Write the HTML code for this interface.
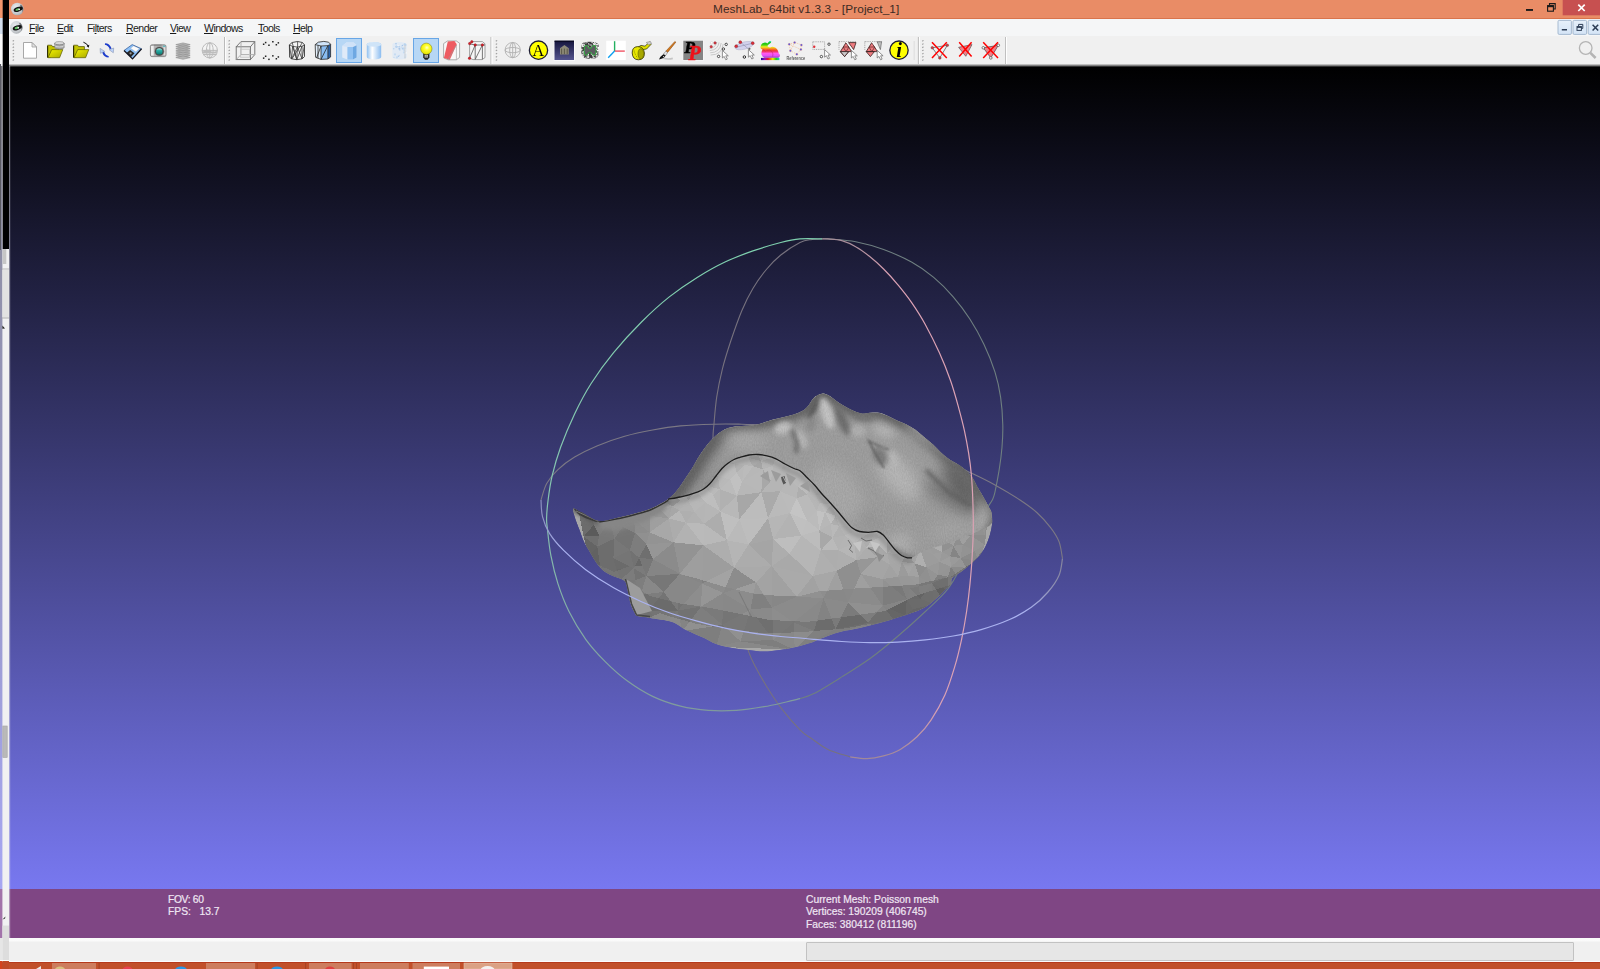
<!DOCTYPE html>
<html>
<head>
<meta charset="utf-8">
<title>MeshLab_64bit v1.3.3 - [Project_1]</title>
<style>
html,body{margin:0;padding:0;}
body{width:1600px;height:969px;overflow:hidden;position:relative;background:#000;font-family:"Liberation Sans",sans-serif;}
.abs{position:absolute;}
#titlebar{left:9px;top:0;width:1591px;height:18px;background:#e98c66;border-bottom:1px solid #d9744c;}
#title{left:713px;top:2px;width:186px;height:15px;line-height:15px;font-size:11.8px;letter-spacing:0.1px;color:#3b2a24;white-space:nowrap;text-align:center;}
#menubar{left:9px;top:19px;width:1591px;height:17px;background:#f5f6f7;}
.mi{position:absolute;top:22px;font-size:10.6px;line-height:13px;color:#1a1a1a;white-space:nowrap;letter-spacing:-0.6px;}
.mi u{text-decoration:underline;text-decoration-thickness:1px;text-underline-offset:1px;}
#toolbar{left:9px;top:36px;width:1591px;height:28px;background:#f0f0f0;}
#tbshadow{left:9px;top:64px;width:1591px;height:3px;background:linear-gradient(#dcdcdc,#8c8c8c 45%,#303030 85%,#000);}
#viewport{left:9px;top:66px;width:1591px;height:824px;background:linear-gradient(#000000,#7878f0);}
#infobar{left:9px;top:889px;width:1591px;height:49px;background:#7f4684;}
.it{position:absolute;font-size:10.3px;line-height:12.35px;color:#efe6f3;white-space:pre;-webkit-text-stroke:0.2px #efe6f3;}
#statusbar{left:9px;top:938px;width:1591px;height:24px;background:linear-gradient(#fbfbfb 0,#fafafa 3px,#f0f0f0 4px,#f0f0f0 22.5px,#fcfcfc 23px);}
#progress{left:806px;top:942px;width:766px;height:17px;background:#e6e6e6;border:1px solid #c2c2c2;border-radius:1px;}
</style>
</head>
<body>
<div id="viewport" class="abs"></div>
<!--SCENE-->
<svg class="abs" id="scene" style="left:0;top:0" width="1600" height="969" viewBox="0 0 1600 969">
<defs>
<clipPath id="cSil"><path d="M573.2 508.3C574.4 507.4 577.7 510.4 582.0 512.5C586.3 514.6 592.7 520.2 599.0 521.0C605.3 521.8 614.0 518.5 620.0 517.3C626.0 516.0 630.0 514.9 635.0 513.5C640.0 512.1 645.5 510.8 650.0 509.0C654.5 507.2 659.0 504.6 662.0 503.0C665.0 501.4 666.0 500.8 668.0 499.3C670.0 497.8 672.0 496.1 674.0 494.0C676.0 491.9 678.0 489.2 680.0 486.5C682.0 483.8 684.0 480.5 686.0 477.5C688.0 474.5 690.0 471.8 692.0 468.5C694.0 465.2 696.0 461.2 698.0 458.0C700.0 454.8 702.0 451.8 704.0 449.0C706.0 446.2 708.0 443.8 710.0 441.5C712.0 439.2 714.0 437.2 716.0 435.5C718.0 433.8 720.0 432.2 722.0 431.0C724.0 429.8 725.5 428.8 728.0 428.0C730.5 427.2 734.0 426.6 737.0 426.2C740.0 425.8 743.0 426.0 746.0 425.8C749.0 425.6 752.5 425.4 755.0 425.0C757.5 424.6 758.5 424.2 761.0 423.5C763.5 422.8 767.0 421.4 770.0 420.5C773.0 419.6 775.5 419.2 779.0 418.3C782.5 417.4 787.8 416.2 791.0 415.3C794.2 414.4 795.8 413.9 798.0 413.0C800.2 412.1 802.2 411.2 804.0 410.0C805.8 408.8 807.0 407.4 808.5 405.5C810.0 403.6 811.5 400.6 813.0 398.8C814.5 397.1 815.9 395.9 817.5 395.0C819.1 394.1 821.0 393.5 822.8 393.5C824.5 393.5 826.4 394.2 828.0 395.0C829.6 395.8 830.8 396.8 832.5 398.0C834.2 399.2 836.2 401.0 838.5 402.5C840.8 404.0 843.2 405.5 846.0 407.0C848.8 408.5 852.2 410.4 855.0 411.5C857.8 412.6 860.0 413.6 862.5 413.8C865.0 414.0 867.2 412.9 870.0 412.7C872.8 412.5 876.0 412.1 879.0 412.7C882.0 413.2 885.0 414.7 888.0 416.0C891.0 417.3 894.0 419.1 897.0 420.5C900.0 421.9 903.0 422.8 906.0 424.3C909.0 425.8 912.0 427.4 915.0 429.5C918.0 431.6 921.0 434.5 924.0 437.0C927.0 439.5 930.0 441.8 933.0 444.5C936.0 447.2 939.2 451.0 942.0 453.5C944.8 456.0 946.5 457.5 949.5 459.5C952.5 461.5 957.0 463.5 960.0 465.5C963.0 467.5 965.2 469.2 967.5 471.5C969.8 473.8 971.8 476.2 973.5 479.0C975.2 481.8 976.5 485.2 978.0 488.0C979.5 490.8 981.0 492.9 982.5 495.5C984.0 498.1 985.5 500.8 987.0 503.5C988.5 506.2 990.6 508.8 991.5 512.0C992.4 515.2 992.5 518.8 992.3 522.5C992.0 526.2 991.1 530.5 990.0 534.5C988.9 538.5 987.2 543.0 985.5 546.5C983.8 550.0 981.8 552.8 979.5 555.5C977.2 558.2 974.8 560.5 972.0 563.0C969.2 565.5 966.2 568.0 963.0 570.5C959.8 573.0 954.5 575.6 952.5 578.0C950.5 580.4 952.2 582.8 951.0 584.8C949.8 586.8 947.5 587.6 945.0 590.0C942.5 592.4 939.5 596.0 936.0 599.0C932.5 602.0 928.5 605.5 924.0 608.0C919.5 610.5 913.0 612.5 909.0 614.0C905.0 615.5 904.8 615.5 900.0 617.0C895.2 618.5 886.7 621.2 880.0 623.0C873.3 624.8 866.7 626.5 860.0 628.0C853.3 629.5 846.7 630.2 840.0 632.0C833.3 633.8 824.7 637.3 820.0 639.0C815.3 640.7 816.0 641.1 812.0 642.4C808.0 643.7 801.3 645.7 796.0 647.0C790.7 648.3 785.3 649.2 780.0 650.0C774.7 650.8 769.3 651.6 764.0 651.6C758.7 651.6 753.3 650.6 748.0 650.0C742.7 649.4 737.3 649.0 732.0 648.0C726.7 647.0 720.7 645.7 716.0 644.0C711.3 642.3 709.0 640.3 704.0 638.0C699.0 635.7 691.3 632.7 686.0 630.0C680.7 627.3 678.0 624.0 672.0 622.0C666.0 620.0 655.7 619.0 650.0 618.0C644.3 617.0 640.5 617.0 638.0 616.3C635.5 615.6 636.2 616.1 635.0 614.0C633.8 611.9 631.8 607.5 630.5 603.5C629.2 599.5 628.5 593.8 627.5 590.0C626.5 586.2 626.8 583.2 624.5 581.0C622.2 578.8 617.2 578.0 614.0 576.5C610.8 575.0 607.8 574.0 605.0 572.0C602.2 570.0 600.0 567.8 597.5 564.5C595.0 561.2 592.2 556.2 590.0 552.5C587.8 548.8 585.8 545.8 584.0 542.0C582.2 538.2 581.0 534.0 579.5 530.0C578.0 526.0 576.0 521.6 575.0 518.0C574.0 514.4 572.0 509.2 573.2 508.3Z"/></clipPath>
<clipPath id="cFace"><path d="M668.0 499.3L674.0 494.0L680.0 486.5L686.0 477.5L692.0 468.5L698.0 458.0L704.0 449.0L710.0 441.5L716.0 435.5L722.0 431.0L728.0 428.0L737.0 426.2L746.0 425.8L755.0 425.0L761.0 423.5L770.0 420.5L779.0 418.3L791.0 415.3L798.0 413.0L804.0 410.0L808.5 405.5L813.0 398.8L817.5 395.0L822.8 393.5L828.0 395.0L832.5 398.0L838.5 402.5L846.0 407.0L855.0 411.5L862.5 413.8L870.0 412.7L879.0 412.7L888.0 416.0L897.0 420.5L906.0 424.3L915.0 429.5L924.0 437.0L933.0 444.5L942.0 453.5L949.5 459.5L960.0 465.5L967.5 471.5L973.5 479.0L978.0 488.0L982.5 495.5L987.0 503.5L991.5 512.0L992.3 522.5L989.0 526.0L975.0 533.0L958.0 540.0L940.0 546.0L924.0 550.5L912.0 557.8L907.5 557.8L901.5 555.5L895.5 550.3L889.5 542.8L883.5 535.3L877.5 531.5L868.5 532.3L859.5 531.5L852.0 527.8L844.5 519.5L837.0 510.5L829.5 502.0L822.0 494.0L814.5 485.0L807.0 477.5L800.0 470.8L794.0 468.5L785.0 464.0L776.0 458.8L767.0 455.8L758.0 454.5L749.0 455.0L740.0 457.3L734.0 459.5L728.0 463.3L722.0 468.5L716.0 476.0L710.0 483.5L704.0 488.8L698.0 491.8L689.0 494.8L680.0 497.0L668.0 499.3Z"/></clipPath>
<filter id="b1" x="-50%" y="-50%" width="200%" height="200%"><feGaussianBlur stdDeviation="1.1"/></filter>
<filter id="b3" x="-50%" y="-50%" width="200%" height="200%"><feGaussianBlur stdDeviation="2.8"/></filter>
<filter id="b2" x="-50%" y="-50%" width="200%" height="200%"><feGaussianBlur stdDeviation="2"/></filter>
<filter id="b4" x="-50%" y="-50%" width="200%" height="200%"><feGaussianBlur stdDeviation="4"/></filter>
<filter id="b7" x="-50%" y="-50%" width="200%" height="200%"><feGaussianBlur stdDeviation="7"/></filter>
<filter id="grain" x="0" y="0" width="100%" height="100%"><feTurbulence type="fractalNoise" baseFrequency="0.9 0.45" numOctaves="2" seed="4"/><feColorMatrix type="matrix" values="0 0 0 0 0  0 0 0 0 0  0 0 0 0 0  1.6 0 0 0 -0.35"/></filter>
<filter id="b12" x="-50%" y="-50%" width="200%" height="200%"><feGaussianBlur stdDeviation="12"/></filter>
<linearGradient id="gGreen" gradientUnits="userSpaceOnUse" x1="700" y1="250" x2="700" y2="710"><stop offset="0" stop-color="#7fd0ae"/><stop offset="0.55" stop-color="#86c4b0"/><stop offset="1" stop-color="#7f9a9c"/></linearGradient>
<linearGradient id="gHor" gradientUnits="userSpaceOnUse" x1="541" y1="0" x2="1063" y2="0"><stop offset="0" stop-color="#8c90c0"/><stop offset="0.04" stop-color="#aab2f0"/><stop offset="0.93" stop-color="#aab2f0"/><stop offset="1" stop-color="#85849c"/></linearGradient>
<linearGradient id="gPink" gradientUnits="userSpaceOnUse" x1="0" y1="239" x2="0" y2="759"><stop offset="0" stop-color="#a48c98"/><stop offset="0.07" stop-color="#dca2b4"/><stop offset="0.9" stop-color="#dca2b4"/><stop offset="1" stop-color="#a08898"/></linearGradient>
</defs>
<g fill="none" stroke-width="1.1">
<path d="M800.0 698.7C802.3 697.9 806.9 697.2 813.9 693.6C820.9 690.0 832.5 682.7 841.8 676.9C851.1 671.1 860.4 665.5 869.7 658.8C879.0 652.1 888.2 644.4 897.5 636.5C906.8 628.6 917.0 619.4 925.4 611.5C933.8 603.6 941.6 597.0 947.7 589.2C953.8 581.5 957.3 574.0 962.0 565.0C966.7 556.0 972.2 543.8 976.0 535.0C979.8 526.2 982.3 517.8 985.0 512.0C987.7 506.2 990.6 503.4 992.3 500.0C994.0 496.6 993.9 497.0 995.0 491.9C996.1 486.8 998.0 477.0 999.2 469.6C1000.4 462.2 1001.4 454.7 1002.0 447.3C1002.6 439.9 1003.0 433.4 1002.8 425.0C1002.6 416.6 1001.9 406.0 1000.6 397.2C999.3 388.4 997.8 380.9 995.0 372.1C992.2 363.3 988.1 353.0 983.9 344.2C979.7 335.4 975.1 327.1 970.0 319.2C964.9 311.3 959.2 303.9 953.2 296.9C947.2 289.9 940.7 283.2 933.7 277.4C926.8 271.6 919.9 266.6 911.5 262.0C903.1 257.4 892.9 252.9 883.6 249.5C874.3 246.1 865.0 243.5 855.7 241.7C846.4 239.9 833.5 239.4 827.9 238.9C822.3 238.4 823.2 238.9 822.3 238.9" stroke="#6f7f80"/>
<path d="M850.2 756.9C846.5 755.6 834.4 752.5 827.9 749.4C821.4 746.3 815.8 741.5 811.1 738.2C806.5 735.0 805.0 735.0 800.0 729.9C795.0 724.8 786.3 714.8 780.8 707.6C775.3 700.4 771.0 693.4 766.8 686.7C762.6 680.0 758.7 673.0 755.7 667.2C752.7 661.4 751.5 659.8 748.7 651.9C745.9 644.0 742.1 632.0 739.0 620.0C735.9 608.0 732.8 593.3 730.0 580.0C727.2 566.7 724.3 553.3 722.0 540.0C719.7 526.7 717.5 512.5 716.0 500.0C714.5 487.5 713.5 475.4 713.0 465.0C712.5 454.6 712.9 444.3 713.0 437.6C713.1 430.9 713.3 431.7 713.9 425.0C714.5 418.3 715.3 406.5 716.7 397.2C718.1 387.9 720.0 378.6 722.3 369.3C724.6 360.0 727.4 351.2 730.6 341.5C733.9 331.8 738.1 319.6 741.8 310.8C745.5 302.0 748.7 295.5 752.9 288.5C757.1 281.5 762.1 274.6 766.8 269.0C771.4 263.4 775.3 259.4 780.8 255.0C786.3 250.6 794.8 245.1 800.0 242.5C805.2 239.9 808.3 240.1 812.0 239.5C815.7 238.9 820.6 239.0 822.3 238.9" stroke="#77727e"/>
<path d="M1062.5 558.5C1061.9 555.7 1061.0 546.9 1059.1 541.8C1057.1 536.7 1054.5 532.8 1050.8 527.9C1047.1 523.0 1041.9 517.1 1036.8 512.5C1031.7 507.9 1027.0 504.6 1020.0 500.0C1013.0 495.4 1002.9 489.4 995.0 485.0C987.1 480.6 982.0 478.1 972.8 473.8C963.6 469.5 952.1 463.8 940.0 459.0C927.9 454.2 913.3 449.0 900.0 445.0C886.7 441.0 873.3 437.7 860.0 435.0C846.7 432.3 831.7 430.5 820.0 429.0C808.3 427.5 799.8 426.7 790.0 426.0C780.2 425.3 769.3 425.3 761.3 425.0C753.3 424.7 749.7 424.3 741.8 424.2C733.9 424.1 724.1 423.9 713.9 424.2C703.7 424.5 690.7 424.9 680.5 425.9C670.3 426.9 661.9 428.3 652.6 430.0C643.3 431.7 634.0 433.6 624.7 436.2C615.4 438.8 605.2 442.4 596.9 445.9C588.5 449.4 581.1 453.1 574.6 457.0C568.1 460.9 562.5 465.2 557.9 469.6C553.2 474.0 549.5 478.4 546.7 483.5C543.9 488.6 542.0 497.2 541.0 500.0" stroke="#7b7884"/>
</g>
<g clip-path="url(#cSil)">
<path d="M573.2 508.3C574.4 507.4 577.7 510.4 582.0 512.5C586.3 514.6 592.7 520.2 599.0 521.0C605.3 521.8 614.0 518.5 620.0 517.3C626.0 516.0 630.0 514.9 635.0 513.5C640.0 512.1 645.5 510.8 650.0 509.0C654.5 507.2 659.0 504.6 662.0 503.0C665.0 501.4 666.0 500.8 668.0 499.3C670.0 497.8 672.0 496.1 674.0 494.0C676.0 491.9 678.0 489.2 680.0 486.5C682.0 483.8 684.0 480.5 686.0 477.5C688.0 474.5 690.0 471.8 692.0 468.5C694.0 465.2 696.0 461.2 698.0 458.0C700.0 454.8 702.0 451.8 704.0 449.0C706.0 446.2 708.0 443.8 710.0 441.5C712.0 439.2 714.0 437.2 716.0 435.5C718.0 433.8 720.0 432.2 722.0 431.0C724.0 429.8 725.5 428.8 728.0 428.0C730.5 427.2 734.0 426.6 737.0 426.2C740.0 425.8 743.0 426.0 746.0 425.8C749.0 425.6 752.5 425.4 755.0 425.0C757.5 424.6 758.5 424.2 761.0 423.5C763.5 422.8 767.0 421.4 770.0 420.5C773.0 419.6 775.5 419.2 779.0 418.3C782.5 417.4 787.8 416.2 791.0 415.3C794.2 414.4 795.8 413.9 798.0 413.0C800.2 412.1 802.2 411.2 804.0 410.0C805.8 408.8 807.0 407.4 808.5 405.5C810.0 403.6 811.5 400.6 813.0 398.8C814.5 397.1 815.9 395.9 817.5 395.0C819.1 394.1 821.0 393.5 822.8 393.5C824.5 393.5 826.4 394.2 828.0 395.0C829.6 395.8 830.8 396.8 832.5 398.0C834.2 399.2 836.2 401.0 838.5 402.5C840.8 404.0 843.2 405.5 846.0 407.0C848.8 408.5 852.2 410.4 855.0 411.5C857.8 412.6 860.0 413.6 862.5 413.8C865.0 414.0 867.2 412.9 870.0 412.7C872.8 412.5 876.0 412.1 879.0 412.7C882.0 413.2 885.0 414.7 888.0 416.0C891.0 417.3 894.0 419.1 897.0 420.5C900.0 421.9 903.0 422.8 906.0 424.3C909.0 425.8 912.0 427.4 915.0 429.5C918.0 431.6 921.0 434.5 924.0 437.0C927.0 439.5 930.0 441.8 933.0 444.5C936.0 447.2 939.2 451.0 942.0 453.5C944.8 456.0 946.5 457.5 949.5 459.5C952.5 461.5 957.0 463.5 960.0 465.5C963.0 467.5 965.2 469.2 967.5 471.5C969.8 473.8 971.8 476.2 973.5 479.0C975.2 481.8 976.5 485.2 978.0 488.0C979.5 490.8 981.0 492.9 982.5 495.5C984.0 498.1 985.5 500.8 987.0 503.5C988.5 506.2 990.6 508.8 991.5 512.0C992.4 515.2 992.5 518.8 992.3 522.5C992.0 526.2 991.1 530.5 990.0 534.5C988.9 538.5 987.2 543.0 985.5 546.5C983.8 550.0 981.8 552.8 979.5 555.5C977.2 558.2 974.8 560.5 972.0 563.0C969.2 565.5 966.2 568.0 963.0 570.5C959.8 573.0 954.5 575.6 952.5 578.0C950.5 580.4 952.2 582.8 951.0 584.8C949.8 586.8 947.5 587.6 945.0 590.0C942.5 592.4 939.5 596.0 936.0 599.0C932.5 602.0 928.5 605.5 924.0 608.0C919.5 610.5 913.0 612.5 909.0 614.0C905.0 615.5 904.8 615.5 900.0 617.0C895.2 618.5 886.7 621.2 880.0 623.0C873.3 624.8 866.7 626.5 860.0 628.0C853.3 629.5 846.7 630.2 840.0 632.0C833.3 633.8 824.7 637.3 820.0 639.0C815.3 640.7 816.0 641.1 812.0 642.4C808.0 643.7 801.3 645.7 796.0 647.0C790.7 648.3 785.3 649.2 780.0 650.0C774.7 650.8 769.3 651.6 764.0 651.6C758.7 651.6 753.3 650.6 748.0 650.0C742.7 649.4 737.3 649.0 732.0 648.0C726.7 647.0 720.7 645.7 716.0 644.0C711.3 642.3 709.0 640.3 704.0 638.0C699.0 635.7 691.3 632.7 686.0 630.0C680.7 627.3 678.0 624.0 672.0 622.0C666.0 620.0 655.7 619.0 650.0 618.0C644.3 617.0 640.5 617.0 638.0 616.3C635.5 615.6 636.2 616.1 635.0 614.0C633.8 611.9 631.8 607.5 630.5 603.5C629.2 599.5 628.5 593.8 627.5 590.0C626.5 586.2 626.8 583.2 624.5 581.0C622.2 578.8 617.2 578.0 614.0 576.5C610.8 575.0 607.8 574.0 605.0 572.0C602.2 570.0 600.0 567.8 597.5 564.5C595.0 561.2 592.2 556.2 590.0 552.5C587.8 548.8 585.8 545.8 584.0 542.0C582.2 538.2 581.0 534.0 579.5 530.0C578.0 526.0 576.0 521.6 575.0 518.0C574.0 514.4 572.0 509.2 573.2 508.3Z" fill="#a8a8a8"/>
<g shape-rendering="crispEdges">
<path d="M835.7 629.1L814.1 630.9L814.0 631.0L825.0 630.0L835.2 629.4Z" fill="#6b6b6b"/>
<path d="M835.2 629.4L825.0 630.0L814.0 631.0L796.2 648.5L796.3 648.5L796.4 648.4L799.1 647.7Z" fill="#808080"/>
<path d="M867.8 622.7L859.7 625.8L870.0 624.0L873.9 626.1L880.4 624.5L880.4 624.4L887.6 622.3Z" fill="#727272"/>
<path d="M806.2 645.6L812.4 643.8L812.6 643.8L820.5 640.4L840.4 633.5L860.3 629.5L860.4 629.5L873.9 626.1L870.0 624.0L859.7 625.8Z" fill="#828282"/>
<path d="M867.8 622.7L835.7 629.1L835.2 629.4L841.0 629.0L859.7 625.8Z" fill="#6d6d6d"/>
<path d="M859.7 625.8L841.0 629.0L835.2 629.4L799.1 647.7L806.2 645.6Z" fill="#7e7e7e"/>
<path d="M782.8 436.8L794.8 428.5L768.4 421.0Z" fill="#b9b9b9"/>
<path d="M768.4 421.0L794.8 428.5L802.0 409.3L797.4 411.6L790.6 413.9L778.6 416.8L777.6 417.1Z" fill="#b7b7b7"/>
<path d="M697.7 457.6L696.1 458.3L696.0 458.4Z" fill="#aaaaaa"/>
<path d="M578.8 512.4L586.0 512.8L582.7 511.2L582.6 511.1L582.1 510.9Z" fill="#656565"/>
<path d="M905.4 615.6L901.8 618.0L909.5 615.4L909.6 615.4L910.3 615.1L929.1 606.0L930.0 605.4Z" fill="#6d6d6d"/>
<path d="M912.9 609.4L905.4 615.6L930.0 605.4L931.0 604.6Z" fill="#666666"/>
<path d="M966.3 567.7L961.0 573.8L963.9 571.7L964.0 571.7L973.0 564.2L973.0 564.1Z" fill="#787878"/>
<path d="M874.3 412.4L871.5 411.2L870.0 411.2L869.8 411.2L867.8 411.5Z" fill="#a8a8a8"/>
<path d="M847.2 408.8L855.0 409.8L846.7 405.7L839.3 401.3L833.4 396.8L833.3 396.8L828.8 393.8L828.7 393.7L828.6 393.6L828.4 393.6L827.1 393.2Z" fill="#a8a8a8"/>
<path d="M874.3 412.4L890.5 415.6L888.7 414.7L888.5 414.6L879.5 411.3L879.4 411.3L879.3 411.2L879.1 411.2L879.0 411.2L871.5 411.2Z" fill="#b6b6b6"/>
<path d="M722.4 624.8L711.9 626.5L721.4 628.2Z" fill="#717171"/>
<path d="M684.6 630.9L685.3 631.3L685.4 631.4L703.4 639.4L715.3 645.3L715.5 645.4L715.6 645.5L716.4 645.6L721.4 628.2L711.9 626.5Z" fill="#7e7e7e"/>
<path d="M722.4 624.8L701.0 606.7L689.4 621.9L695.0 623.5L711.9 626.5Z" fill="#7e7e7e"/>
<path d="M711.9 626.5L695.0 623.5L689.4 621.9L683.2 630.1L684.6 630.9Z" fill="#909090"/>
<path d="M794.8 428.5L831.5 429.0L804.5 407.3L803.1 408.8L802.0 409.3Z" fill="#b3b3b3"/>
<path d="M831.5 429.0L847.2 408.8L827.1 393.2L826.0 392.9Z" fill="#afafaf"/>
<path d="M831.5 429.0L826.0 392.9L825.3 392.7L808.4 403.0L807.3 404.5L804.5 407.3Z" fill="#9e9e9e"/>
<path d="M848.1 602.3L841.1 617.3L855.0 615.5L860.1 614.7Z" fill="#7b7b7b"/>
<path d="M835.7 629.1L867.8 622.7L860.1 614.7L855.0 615.5L841.1 617.3Z" fill="#696969"/>
<path d="M882.6 605.6L886.4 610.3L889.6 608.7Z" fill="#848484"/>
<path d="M905.4 615.6L889.6 608.7L886.4 610.3L894.3 620.3L900.4 618.4L900.5 618.4L901.8 618.0Z" fill="#666666"/>
<path d="M882.6 605.6L876.9 612.2L885.0 611.0L886.4 610.3Z" fill="#878787"/>
<path d="M867.8 622.7L887.6 622.3L894.3 620.3L886.4 610.3L885.0 611.0L876.9 612.2Z" fill="#6f6f6f"/>
<path d="M882.6 605.6L848.1 602.3L860.1 614.7L876.9 612.2Z" fill="#909090"/>
<path d="M867.8 622.7L876.9 612.2L860.1 614.7Z" fill="#7d7d7d"/>
<path d="M860.9 574.0L854.3 588.6L855.0 588.5L870.2 587.6Z" fill="#9f9f9f"/>
<path d="M848.1 602.3L882.6 605.6L870.2 587.6L855.0 588.5L854.3 588.6Z" fill="#8b8b8b"/>
<path d="M984.8 544.7L974.5 551.1L977.1 557.2L982.4 551.0Z" fill="#919191"/>
<path d="M982.4 551.0L977.1 557.2L978.0 559.2L980.3 556.8Z" fill="#797979"/>
<path d="M984.8 544.7L971.0 535.6L974.5 551.1Z" fill="#949494"/>
<path d="M962.7 544.7L974.5 551.1L971.0 535.6Z" fill="#919191"/>
<path d="M950.1 556.4L960.6 558.2L953.4 545.9Z" fill="#858585"/>
<path d="M962.7 544.7L953.4 545.9L960.6 558.2Z" fill="#979797"/>
<path d="M962.7 544.7L960.6 558.2L974.5 551.1Z" fill="#939393"/>
<path d="M960.6 558.2L965.9 566.9L972.0 563.0L974.3 560.3Z" fill="#878787"/>
<path d="M966.3 567.7L973.0 564.1L973.1 564.1L976.5 560.7L974.3 560.3L972.0 563.0L965.9 566.9Z" fill="#676767"/>
<path d="M974.5 551.1L960.6 558.2L974.3 560.3L977.1 557.2Z" fill="#8a8a8a"/>
<path d="M977.1 557.2L974.3 560.3L976.5 560.7L978.0 559.2Z" fill="#6b6b6b"/>
<path d="M948.0 576.7L948.0 577.2L949.7 576.8Z" fill="#7f7f7f"/>
<path d="M948.1 585.7L951.0 584.8L952.8 583.5L953.8 578.9L956.1 577.3L949.7 576.8L948.0 577.2Z" fill="#797979"/>
<path d="M948.1 589.3L950.8 586.9L952.6 584.5L952.8 583.5L951.0 584.8L948.1 585.7Z" fill="#6c6c6c"/>
<path d="M950.8 586.9L952.0 585.9L952.1 585.8L952.2 585.7L952.3 585.6L952.3 585.5L952.4 585.4L952.4 585.3L952.5 585.1L952.6 584.5Z" fill="#686868"/>
<path d="M950.9 566.8L948.0 576.7L949.7 576.8L951.0 576.5L955.4 573.7Z" fill="#7e7e7e"/>
<path d="M955.4 573.7L951.0 576.5L949.7 576.8L956.1 577.3L957.2 576.5Z" fill="#6f6f6f"/>
<path d="M950.1 556.4L950.9 566.8L960.6 558.2Z" fill="#9a9a9a"/>
<path d="M950.9 566.8L955.4 573.7L964.8 567.6Z" fill="#8b8b8b"/>
<path d="M966.3 567.7L964.8 567.6L955.4 573.7L957.2 576.5L961.0 573.8Z" fill="#747474"/>
<path d="M960.6 558.2L950.9 566.8L964.8 567.6L965.9 566.9Z" fill="#969696"/>
<path d="M966.3 567.7L965.9 566.9L964.8 567.6Z" fill="#797979"/>
<path d="M988.1 516.0L984.6 535.1L984.8 544.7Z" fill="#8d8d8d"/>
<path d="M984.8 544.7L984.6 535.1L971.0 535.6Z" fill="#8c8c8c"/>
<path d="M962.7 544.7L971.0 535.6L957.9 536.2Z" fill="#9f9f9f"/>
<path d="M962.7 544.7L957.9 536.2L953.4 545.9Z" fill="#8f8f8f"/>
<path d="M616.4 569.6L613.4 558.3L602.1 566.4L606.2 568.3Z" fill="#6d6d6d"/>
<path d="M600.4 567.6L606.2 568.3L602.1 566.4Z" fill="#717171"/>
<path d="M597.3 546.6L589.7 554.9L591.2 557.2L597.0 564.0L600.1 565.5Z" fill="#626262"/>
<path d="M600.4 567.6L600.1 565.5L597.0 564.0L591.2 557.2L593.5 560.9Z" fill="#6b6b6b"/>
<path d="M613.4 558.3L597.3 546.6L600.1 565.5L602.1 566.4Z" fill="#6d6d6d"/>
<path d="M600.4 567.6L602.1 566.4L600.1 565.5Z" fill="#757575"/>
<path d="M614.5 538.6L599.0 535.5L597.3 546.6Z" fill="#777777"/>
<path d="M614.5 538.6L597.3 546.6L613.4 558.3Z" fill="#6d6d6d"/>
<path d="M740.6 641.4L718.4 646.1L721.2 646.9L789.9 649.7L791.5 649.4Z" fill="#888888"/>
<path d="M722.4 624.8L721.4 628.2L726.0 629.0L727.2 629.1Z" fill="#707070"/>
<path d="M740.6 641.4L727.2 629.1L726.0 629.0L721.4 628.2L716.4 645.6L718.4 646.1Z" fill="#858585"/>
<path d="M794.8 428.5L805.5 444.3L831.5 429.0Z" fill="#aeaeae"/>
<path d="M782.8 436.8L805.5 444.3L794.8 428.5Z" fill="#bdbdbd"/>
<path d="M847.2 408.8L847.5 443.6L874.3 412.4L867.8 411.5L862.6 412.3L855.6 410.1L855.0 409.8Z" fill="#afafaf"/>
<path d="M847.2 408.8L831.5 429.0L847.5 443.6Z" fill="#b3b3b3"/>
<path d="M578.8 512.4L581.3 523.8L589.6 514.6L586.0 512.8Z" fill="#707070"/>
<path d="M581.3 523.8L594.0 524.5L591.5 515.6L589.6 514.6Z" fill="#6d6d6d"/>
<path d="M782.8 436.8L768.4 421.0L767.9 444.5Z" fill="#bcbcbc"/>
<path d="M697.7 457.6L712.1 437.3L708.9 440.4L708.8 440.6L702.8 448.1L702.8 448.2L696.8 457.2L696.7 457.3L696.1 458.3Z" fill="#9c9c9c"/>
<path d="M578.8 512.4L582.1 510.9L581.7 510.7Z" fill="#555555"/>
<path d="M697.7 457.6L696.0 458.4L695.7 459.0Z" fill="#afafaf"/>
<path d="M860.9 574.0L836.7 570.6L843.4 589.4L854.3 588.6Z" fill="#8f8f8f"/>
<path d="M848.1 602.3L854.3 588.6L843.4 589.4Z" fill="#898989"/>
<path d="M920.5 598.8L912.9 609.4L931.0 604.6L932.4 603.6Z" fill="#6b6b6b"/>
<path d="M906.9 599.3L882.6 605.6L889.6 608.7L906.8 600.1Z" fill="#858585"/>
<path d="M905.4 615.6L906.8 600.1L889.6 608.7Z" fill="#636363"/>
<path d="M905.4 615.6L912.9 609.4L907.2 599.9L906.8 600.1Z" fill="#696969"/>
<path d="M906.9 599.3L907.2 599.9L908.5 599.3Z" fill="#7f7f7f"/>
<path d="M912.9 609.4L920.5 598.8L908.5 599.3L907.2 599.9Z" fill="#6b6b6b"/>
<path d="M909.9 588.6L906.9 599.3L908.5 599.3L915.0 596.0L917.0 595.4Z" fill="#828282"/>
<path d="M920.5 598.8L917.0 595.4L915.0 596.0L908.5 599.3Z" fill="#696969"/>
<path d="M932.0 583.3L936.0 589.5L941.7 587.7Z" fill="#6d6d6d"/>
<path d="M941.7 587.7L936.0 589.5L940.6 596.5L946.0 591.1L947.2 590.1Z" fill="#5f5f5f"/>
<path d="M948.0 576.7L945.1 577.9L948.0 577.2Z" fill="#898989"/>
<path d="M932.0 583.3L941.7 587.7L948.1 585.7L948.0 577.2L945.1 577.9Z" fill="#6f6f6f"/>
<path d="M947.2 590.1L948.1 589.3L948.1 585.7L941.7 587.7Z" fill="#676767"/>
<path d="M932.0 583.3L932.5 590.6L936.0 589.5Z" fill="#7b7b7b"/>
<path d="M936.0 589.5L932.5 590.6L933.3 602.9L936.9 600.2L937.1 600.1L940.6 596.5Z" fill="#6e6e6e"/>
<path d="M932.0 583.3L924.9 592.9L932.5 590.6Z" fill="#7e7e7e"/>
<path d="M920.5 598.8L932.4 603.6L933.3 602.9L932.5 590.6L924.9 592.9Z" fill="#6d6d6d"/>
<path d="M988.1 516.0L980.9 523.5L984.6 535.1Z" fill="#949494"/>
<path d="M971.0 535.6L984.6 535.1L980.9 523.5Z" fill="#919191"/>
<path d="M922.1 445.7L937.6 447.0L934.1 443.4L934.0 443.3L923.0 434.3Z" fill="#a3a3a3"/>
<path d="M905.5 431.1L922.1 445.7L923.0 434.3L920.7 432.3Z" fill="#9c9c9c"/>
<path d="M905.5 431.1L910.9 425.4L906.8 423.0L906.6 422.9L897.6 419.1L896.4 418.5Z" fill="#989898"/>
<path d="M905.5 431.1L920.7 432.3L916.0 428.3L915.9 428.3L915.8 428.2L910.9 425.4Z" fill="#b0b0b0"/>
<path d="M832.5 537.6L830.8 524.0L819.3 530.3Z" fill="#b5b5b5"/>
<path d="M801.5 535.5L819.3 530.3L806.9 520.3Z" fill="#bfbfbf"/>
<path d="M663.8 591.9L646.9 594.1L650.0 596.0L658.7 598.2Z" fill="#7d7d7d"/>
<path d="M640.5 594.9L648.7 610.8L658.7 598.2L650.0 596.0L646.9 594.1Z" fill="#6f6f6f"/>
<path d="M773.4 640.0L740.6 641.4L791.5 649.4L793.0 649.1Z" fill="#7e7e7e"/>
<path d="M723.1 593.0L701.0 606.6L710.0 608.0L722.7 610.5Z" fill="#898989"/>
<path d="M701.0 606.7L722.4 624.8L722.7 610.5L710.0 608.0L701.0 606.6Z" fill="#7a7a7a"/>
<path d="M874.3 412.4L847.5 443.6L878.8 434.7Z" fill="#b6b6b6"/>
<path d="M874.3 412.4L878.8 434.7L894.1 417.4L890.5 415.6Z" fill="#b5b5b5"/>
<path d="M878.8 434.7L905.5 431.1L896.4 418.5L894.1 417.4Z" fill="#b1b1b1"/>
<path d="M831.5 429.0L805.5 444.3L820.8 459.4Z" fill="#b2b2b2"/>
<path d="M831.5 429.0L820.8 459.4L847.5 443.6Z" fill="#b9b9b9"/>
<path d="M599.0 535.5L583.7 536.5L597.3 546.6Z" fill="#6f6f6f"/>
<path d="M599.0 535.5L594.0 524.5L583.7 536.5Z" fill="#5b5b5b"/>
<path d="M594.0 524.5L581.3 523.8L583.7 536.5Z" fill="#6c6c6c"/>
<path d="M597.3 546.6L583.7 536.5L587.2 550.7L588.7 553.2L588.7 553.3L589.7 554.9Z" fill="#646464"/>
<path d="M578.8 512.4L583.7 536.5L581.3 523.8Z" fill="#636363"/>
<path d="M742.5 425.9L768.4 421.0L777.6 417.1L769.6 419.0L769.5 419.1L760.6 422.1L754.8 423.5L748.1 424.1Z" fill="#acacac"/>
<path d="M742.5 425.9L748.1 424.1L746.7 424.2Z" fill="#b8b8b8"/>
<path d="M811.7 398.0L808.4 403.0L825.3 392.7L825.1 392.6Z" fill="#b8b8b8"/>
<path d="M742.5 425.9L746.7 424.2L745.9 424.3L736.9 424.7L736.8 424.7L736.7 424.7L727.7 426.5L727.6 426.6L727.5 426.6L727.3 426.7L722.0 429.3Z" fill="#adadad"/>
<path d="M813.1 396.7L812.0 397.7L811.9 397.7L811.8 397.9L811.8 398.0L811.7 398.0L825.1 392.6L825.0 392.6Z" fill="#acacac"/>
<path d="M614.5 538.6L610.4 522.1L599.0 535.5Z" fill="#787878"/>
<path d="M599.0 535.5L610.4 522.1L594.0 524.5Z" fill="#7c7c7c"/>
<path d="M594.0 524.5L610.4 522.1L603.0 518.8L599.2 519.4L591.5 515.6Z" fill="#7d7d7d"/>
<path d="M610.4 522.1L618.3 516.1L603.0 518.8Z" fill="#868686"/>
<path d="M832.5 537.6L819.3 530.3L820.7 550.5Z" fill="#a8a8a8"/>
<path d="M801.5 535.5L820.7 550.5L819.3 530.3Z" fill="#bcbcbc"/>
<path d="M860.9 574.0L856.4 560.0L836.7 570.6Z" fill="#8f8f8f"/>
<path d="M819.3 530.3L816.9 510.9L806.9 520.3Z" fill="#bbbbbb"/>
<path d="M616.4 569.6L606.2 568.3L614.0 572.0L617.0 570.9Z" fill="#6d6d6d"/>
<path d="M600.4 567.6L620.3 579.3L620.7 579.6L617.0 570.9L614.0 572.0L606.2 568.3Z" fill="#757575"/>
<path d="M600.4 567.6L604.6 571.8L605.0 572.0L614.0 576.5L620.3 579.3Z" fill="#727272"/>
<path d="M620.8 579.7L620.3 579.3L614.0 576.5L605.0 572.0L604.6 571.8L608.0 575.2L613.3 577.8L613.4 577.9L621.6 581.4Z" fill="#757575"/>
<path d="M628.8 595.9L626.0 590.4L626.1 590.4L626.9 594.0Z" fill="#787878"/>
<path d="M600.4 567.6L602.9 570.9L604.6 571.8Z" fill="#696969"/>
<path d="M631.6 609.4L628.8 595.9L626.9 594.0L629.0 603.8L629.1 604.0L629.1 604.1L631.1 608.7Z" fill="#717171"/>
<path d="M604.9 573.6L608.0 575.2L604.6 571.8L602.9 570.9Z" fill="#6d6d6d"/>
<path d="M600.4 567.6L593.5 560.9L596.2 565.3L596.3 565.4L596.4 565.6L600.8 569.9L602.9 570.9Z" fill="#707070"/>
<path d="M602.9 570.9L600.8 569.9L603.9 573.1L604.1 573.2L604.2 573.3L604.3 573.3L604.9 573.6Z" fill="#757575"/>
<path d="M631.6 609.4L631.1 608.7L631.2 608.9Z" fill="#767676"/>
<path d="M640.5 594.9L628.8 595.9L631.6 609.4Z" fill="#7d7d7d"/>
<path d="M648.7 610.8L631.6 609.4L639.6 618.0L640.6 618.2Z" fill="#727272"/>
<path d="M640.5 594.9L631.6 609.4L648.7 610.8Z" fill="#797979"/>
<path d="M613.4 558.3L616.4 569.6L621.6 569.1L629.6 566.2Z" fill="#6b6b6b"/>
<path d="M633.8 568.2L629.6 566.2L621.6 569.1Z" fill="#737373"/>
<path d="M616.4 569.6L617.0 570.9L621.6 569.1Z" fill="#686868"/>
<path d="M633.8 568.2L621.6 569.1L617.0 570.9L620.7 579.6L620.8 579.6Z" fill="#737373"/>
<path d="M663.8 591.9L658.7 598.2L670.7 601.2Z" fill="#747474"/>
<path d="M648.7 610.8L677.7 610.6L670.7 601.2L658.7 598.2Z" fill="#6b6b6b"/>
<path d="M701.0 606.7L677.7 610.6L679.6 619.1L689.4 621.9Z" fill="#727272"/>
<path d="M681.9 629.4L683.2 630.1L689.4 621.9L679.6 619.1Z" fill="#848484"/>
<path d="M679.9 574.2L679.6 574.1L663.8 591.9L670.7 601.2L678.1 603.0Z" fill="#888888"/>
<path d="M677.7 610.6L678.1 603.0L670.7 601.2Z" fill="#7a7a7a"/>
<path d="M697.7 457.6L695.7 459.0L695.3 459.8Z" fill="#b3b3b3"/>
<path d="M755.9 582.3L734.0 567.4L725.6 587.1L734.7 589.2Z" fill="#8c8c8c"/>
<path d="M723.1 593.0L734.7 589.2L725.6 587.1Z" fill="#888888"/>
<path d="M748.6 544.5L726.9 540.2L734.0 567.4Z" fill="#b5b5b5"/>
<path d="M703.4 545.3L734.0 567.4L726.9 540.2Z" fill="#aeaeae"/>
<path d="M905.5 431.1L878.8 434.7L904.8 448.6Z" fill="#b8b8b8"/>
<path d="M916.6 453.0L922.1 445.7L904.8 448.6Z" fill="#ababab"/>
<path d="M905.5 431.1L904.8 448.6L922.1 445.7Z" fill="#b2b2b2"/>
<path d="M847.5 443.6L857.8 466.9L878.8 434.7Z" fill="#b1b1b1"/>
<path d="M878.8 434.7L857.8 466.9L880.7 466.1Z" fill="#b6b6b6"/>
<path d="M768.4 421.0L757.2 438.2L767.9 444.5Z" fill="#b9b9b9"/>
<path d="M768.4 421.0L742.5 425.9L757.2 438.2Z" fill="#b4b4b4"/>
<path d="M697.7 457.6L710.0 448.9L715.8 433.8L715.1 434.3L714.9 434.4L712.1 437.3Z" fill="#afafaf"/>
<path d="M697.7 457.6L708.2 464.6L710.0 448.9Z" fill="#b2b2b2"/>
<path d="M889.6 516.7L907.3 511.8L902.0 502.8Z" fill="#b6b6b6"/>
<path d="M882.7 579.1L860.9 574.0L870.2 587.6L882.7 586.8Z" fill="#999999"/>
<path d="M882.6 605.6L882.7 586.8L870.2 587.6Z" fill="#858585"/>
<path d="M882.7 579.1L882.7 586.8L891.3 586.3Z" fill="#929292"/>
<path d="M882.6 605.6L906.9 599.3L891.3 586.3L882.7 586.8Z" fill="#7d7d7d"/>
<path d="M832.5 537.6L820.7 550.5L838.3 550.0Z" fill="#bababa"/>
<path d="M836.7 570.6L838.3 550.0L820.7 550.5Z" fill="#adadad"/>
<path d="M836.7 570.6L856.4 560.0L838.3 550.0Z" fill="#aeaeae"/>
<path d="M814.1 630.9L793.5 622.4L794.0 632.4L803.0 632.0L814.0 631.0Z" fill="#7d7d7d"/>
<path d="M814.0 631.0L803.0 632.0L794.0 632.4L794.7 648.8L796.2 648.5Z" fill="#8c8c8c"/>
<path d="M793.5 622.4L781.5 632.9L794.0 632.4Z" fill="#757575"/>
<path d="M773.4 640.0L793.0 649.1L794.7 648.8L794.0 632.4L781.5 632.9Z" fill="#888888"/>
<path d="M836.7 570.6L827.0 590.7L843.4 589.4Z" fill="#a0a0a0"/>
<path d="M823.5 598.1L848.1 602.3L843.4 589.4L827.0 590.7Z" fill="#888888"/>
<path d="M823.5 598.1L817.0 620.6L831.6 618.6Z" fill="#838383"/>
<path d="M814.1 630.9L835.7 629.1L831.6 618.6L817.0 620.6Z" fill="#6c6c6c"/>
<path d="M848.1 602.3L823.5 598.1L831.6 618.6L841.1 617.3Z" fill="#8a8a8a"/>
<path d="M835.7 629.1L841.1 617.3L831.6 618.6Z" fill="#7a7a7a"/>
<path d="M823.5 598.1L794.9 621.2L800.0 621.5L810.0 621.5L817.0 620.6Z" fill="#898989"/>
<path d="M793.5 622.4L814.1 630.9L817.0 620.6L810.0 621.5L800.0 621.5L794.9 621.2Z" fill="#787878"/>
<path d="M823.5 598.1L796.7 596.8L793.7 621.2L794.9 621.2Z" fill="#8b8b8b"/>
<path d="M793.5 622.4L794.9 621.2L793.7 621.2Z" fill="#757575"/>
<path d="M801.5 535.5L789.4 553.8L820.7 550.5Z" fill="#b6b6b6"/>
<path d="M801.5 535.5L773.3 539.1L789.4 553.8Z" fill="#bebebe"/>
<path d="M971.0 535.6L957.5 526.6L957.9 536.2Z" fill="#8b8b8b"/>
<path d="M988.1 516.0L988.0 505.7L977.7 508.5Z" fill="#a3a3a3"/>
<path d="M988.1 516.0L977.7 508.5L980.9 523.5Z" fill="#9d9d9d"/>
<path d="M977.7 508.5L988.0 505.7L984.8 496.5L984.0 495.2Z" fill="#9f9f9f"/>
<path d="M832.3 504.5L835.7 515.9L844.9 507.6Z" fill="#b7b7b7"/>
<path d="M832.3 504.5L824.6 495.2L819.7 503.2Z" fill="#b2b2b2"/>
<path d="M819.3 530.3L830.8 524.0L824.9 512.2Z" fill="#b7b7b7"/>
<path d="M819.3 530.3L824.9 512.2L816.9 510.9Z" fill="#c2c2c2"/>
<path d="M830.8 524.0L835.7 515.9L824.9 512.2Z" fill="#c0c0c0"/>
<path d="M832.3 504.5L824.9 512.2L835.7 515.9Z" fill="#b1b1b1"/>
<path d="M832.3 504.5L819.7 503.2L824.9 512.2Z" fill="#bdbdbd"/>
<path d="M819.7 503.2L816.9 510.9L824.9 512.2Z" fill="#bababa"/>
<path d="M629.8 550.1L613.4 558.3L629.6 566.2L630.0 566.0L633.3 566.0Z" fill="#757575"/>
<path d="M633.8 568.2L633.3 566.0L630.0 566.0L629.6 566.2Z" fill="#757575"/>
<path d="M639.1 557.7L629.8 550.1L633.3 566.0L634.9 566.0Z" fill="#727272"/>
<path d="M633.8 568.2L634.9 566.0L633.3 566.0Z" fill="#757575"/>
<path d="M614.5 538.6L613.4 558.3L629.8 550.1Z" fill="#777777"/>
<path d="M614.5 538.6L629.8 550.1L635.1 533.1Z" fill="#737373"/>
<path d="M635.2 580.1L633.8 568.2L620.8 579.6L620.9 579.7Z" fill="#7c7c7c"/>
<path d="M635.2 580.1L633.0 585.5L638.3 588.8Z" fill="#7c7c7c"/>
<path d="M628.8 595.9L640.5 594.9L638.3 588.8L633.0 585.5Z" fill="#797979"/>
<path d="M635.2 580.1L620.9 579.7L630.5 584.0L633.0 585.5Z" fill="#7a7a7a"/>
<path d="M620.8 579.7L621.6 581.4L623.3 582.1L626.0 590.4L628.8 595.9L633.0 585.5L630.5 584.0L620.9 579.7Z" fill="#787878"/>
<path d="M653.0 559.3L639.1 557.7L642.4 566.0L644.0 566.0L649.8 567.3Z" fill="#777777"/>
<path d="M646.4 576.1L649.8 567.3L644.0 566.0L642.4 566.0Z" fill="#777777"/>
<path d="M639.1 557.7L634.9 566.0L642.4 566.0Z" fill="#676767"/>
<path d="M633.8 568.2L646.4 576.1L642.4 566.0L634.9 566.0Z" fill="#7b7b7b"/>
<path d="M633.8 568.2L635.2 580.1L646.4 576.1Z" fill="#737373"/>
<path d="M679.9 573.8L653.0 559.3L649.8 567.3L665.0 570.5L678.5 573.9Z" fill="#858585"/>
<path d="M646.4 576.1L678.5 573.9L665.0 570.5L649.8 567.3Z" fill="#858585"/>
<path d="M646.4 576.1L663.8 591.9L679.6 574.1L678.5 573.9Z" fill="#777777"/>
<path d="M663.8 591.9L646.4 576.1L641.8 590.9L646.9 594.1Z" fill="#888888"/>
<path d="M640.5 594.9L646.9 594.1L641.8 590.9Z" fill="#7d7d7d"/>
<path d="M646.4 576.1L635.2 580.1L638.3 588.8L641.8 590.9Z" fill="#7e7e7e"/>
<path d="M640.5 594.9L641.8 590.9L638.3 588.8Z" fill="#7b7b7b"/>
<path d="M610.4 522.1L622.8 526.7L623.0 515.0L619.7 515.8L618.3 516.1Z" fill="#7e7e7e"/>
<path d="M614.5 538.6L622.8 526.7L610.4 522.1Z" fill="#7e7e7e"/>
<path d="M614.5 538.6L635.1 533.1L622.8 526.7Z" fill="#747474"/>
<path d="M703.4 545.3L679.9 573.8L682.2 574.8L695.0 578.0L702.2 580.2Z" fill="#9e9e9e"/>
<path d="M702.1 583.6L702.2 580.2L695.0 578.0L682.2 574.8Z" fill="#868686"/>
<path d="M734.0 567.4L703.4 545.3L702.2 580.2L706.4 581.4Z" fill="#9d9d9d"/>
<path d="M702.1 583.6L706.4 581.4L702.2 580.2Z" fill="#7f7f7f"/>
<path d="M734.0 567.4L706.4 581.4L725.0 587.0L725.6 587.1Z" fill="#a3a3a3"/>
<path d="M702.1 583.6L723.1 593.0L725.6 587.1L725.0 587.0L706.4 581.4Z" fill="#8c8c8c"/>
<path d="M723.1 593.0L702.1 583.6L701.0 606.6L701.0 606.6Z" fill="#969696"/>
<path d="M702.1 583.6L683.6 604.0L701.0 606.6Z" fill="#8d8d8d"/>
<path d="M677.7 610.6L701.0 606.7L701.0 606.6L683.6 604.0Z" fill="#787878"/>
<path d="M679.9 573.8L679.9 574.2L682.2 574.8Z" fill="#959595"/>
<path d="M702.1 583.6L682.2 574.8L679.9 574.2L678.1 603.0L680.0 603.5L683.6 604.0Z" fill="#888888"/>
<path d="M677.7 610.6L683.6 604.0L680.0 603.5L678.1 603.0Z" fill="#737373"/>
<path d="M677.7 610.6L669.2 616.1L672.0 617.0L679.6 619.1Z" fill="#787878"/>
<path d="M661.0 621.5L671.5 623.4L681.9 629.4L679.6 619.1L672.0 617.0L669.2 616.1Z" fill="#8a8a8a"/>
<path d="M677.7 610.6L648.7 610.8L653.0 616.1L660.0 613.0L669.2 616.1Z" fill="#747474"/>
<path d="M669.2 616.1L660.0 613.0L653.0 616.1L656.8 620.8L661.0 621.5Z" fill="#888888"/>
<path d="M648.7 610.8L640.6 618.2L646.6 619.0L653.0 616.1Z" fill="#717171"/>
<path d="M653.0 616.1L646.6 619.0L649.8 619.5L656.8 620.8Z" fill="#848484"/>
<path d="M635.1 533.1L646.4 544.3L649.6 532.4Z" fill="#909090"/>
<path d="M639.1 557.7L646.4 544.3L629.8 550.1Z" fill="#7d7d7d"/>
<path d="M635.1 533.1L629.8 550.1L646.4 544.3Z" fill="#7d7d7d"/>
<path d="M653.0 559.3L646.4 544.3L639.1 557.7Z" fill="#6f6f6f"/>
<path d="M660.1 509.8L664.6 500.5L662.7 500.8L661.3 501.7L656.6 504.0Z" fill="#a7a7a7"/>
<path d="M697.7 457.6L695.3 459.8L694.8 460.6Z" fill="#afafaf"/>
<path d="M660.1 509.8L650.1 515.8L668.9 518.5Z" fill="#979797"/>
<path d="M649.6 532.4L668.9 518.5L650.1 515.8Z" fill="#9f9f9f"/>
<path d="M650.1 515.8L660.1 509.8L656.6 504.0L654.1 505.3Z" fill="#a3a3a3"/>
<path d="M650.1 515.8L654.1 505.3L649.4 507.6L644.0 509.2Z" fill="#818181"/>
<path d="M878.8 434.7L900.1 457.3L904.8 448.6Z" fill="#bebebe"/>
<path d="M878.8 434.7L880.7 466.1L900.1 457.3Z" fill="#bfbfbf"/>
<path d="M889.6 516.7L902.0 502.8L889.4 499.3Z" fill="#b2b2b2"/>
<path d="M889.6 516.7L889.4 499.3L872.3 508.4Z" fill="#b9b9b9"/>
<path d="M847.5 443.6L820.8 459.4L836.4 463.8Z" fill="#bdbdbd"/>
<path d="M847.5 443.6L836.4 463.8L857.8 466.9Z" fill="#b9b9b9"/>
<path d="M880.7 466.1L857.8 466.9L870.8 485.8Z" fill="#ababab"/>
<path d="M859.8 503.3L872.3 508.4L870.8 485.8Z" fill="#b4b4b4"/>
<path d="M872.3 508.4L889.4 499.3L870.8 485.8Z" fill="#a2a2a2"/>
<path d="M710.0 448.9L724.6 442.0L718.3 431.9L715.8 433.8Z" fill="#bbbbbb"/>
<path d="M723.9 451.3L724.6 442.0L710.0 448.9Z" fill="#a8a8a8"/>
<path d="M723.9 451.3L735.0 449.0L724.6 442.0Z" fill="#aeaeae"/>
<path d="M724.6 442.0L742.5 425.9L722.0 429.3L721.3 429.7L721.2 429.7L721.1 429.8L718.3 431.9Z" fill="#afafaf"/>
<path d="M767.9 444.5L757.2 438.2L755.1 450.2Z" fill="#b6b6b6"/>
<path d="M742.5 425.9L745.0 443.1L757.2 438.2Z" fill="#b4b4b4"/>
<path d="M742.5 425.9L724.6 442.0L745.0 443.1Z" fill="#b3b3b3"/>
<path d="M735.0 449.0L745.0 443.1L724.6 442.0Z" fill="#adadad"/>
<path d="M757.2 438.2L745.0 443.1L755.1 450.2Z" fill="#b6b6b6"/>
<path d="M748.6 458.0L745.0 443.1L735.0 449.0Z" fill="#b9b9b9"/>
<path d="M748.6 458.0L755.1 450.2L745.0 443.1Z" fill="#aeaeae"/>
<path d="M748.6 458.0L744.2 464.9L752.9 466.2Z" fill="#b5b5b5"/>
<path d="M649.6 532.4L673.5 542.4L668.9 518.5Z" fill="#a8a8a8"/>
<path d="M653.0 559.3L673.5 542.4L646.4 544.3Z" fill="#969696"/>
<path d="M649.6 532.4L646.4 544.3L673.5 542.4Z" fill="#939393"/>
<path d="M668.9 518.5L673.5 542.4L685.9 522.6Z" fill="#acacac"/>
<path d="M653.0 559.3L679.9 573.8L673.5 542.4Z" fill="#8b8b8b"/>
<path d="M703.4 545.3L673.5 542.4L679.9 573.8Z" fill="#939393"/>
<path d="M703.4 545.3L685.9 522.6L673.5 542.4Z" fill="#b2b2b2"/>
<path d="M889.8 564.5L882.7 579.1L898.1 576.7Z" fill="#a2a2a2"/>
<path d="M898.1 576.7L901.6 585.6L906.6 585.3Z" fill="#989898"/>
<path d="M906.9 599.3L909.9 588.6L906.6 585.3L901.6 585.6Z" fill="#818181"/>
<path d="M898.1 576.7L882.7 579.1L891.3 586.3L901.6 585.6Z" fill="#969696"/>
<path d="M906.9 599.3L901.6 585.6L891.3 586.3Z" fill="#797979"/>
<path d="M953.4 545.9L957.9 536.2L942.0 537.2Z" fill="#9f9f9f"/>
<path d="M860.9 574.0L882.7 579.1L877.6 557.2Z" fill="#a5a5a5"/>
<path d="M889.8 564.5L877.6 557.2L882.7 579.1Z" fill="#a5a5a5"/>
<path d="M860.9 574.0L877.6 557.2L856.4 560.0Z" fill="#979797"/>
<path d="M856.4 560.0L877.6 557.2L866.2 547.7Z" fill="#adadad"/>
<path d="M856.4 560.0L854.4 543.3L838.3 550.0Z" fill="#b6b6b6"/>
<path d="M856.4 560.0L866.2 547.7L854.4 543.3Z" fill="#b0b0b0"/>
<path d="M796.7 596.8L772.0 607.5L791.6 621.1L793.7 621.2Z" fill="#8b8b8b"/>
<path d="M793.5 622.4L793.7 621.2L791.6 621.1Z" fill="#757575"/>
<path d="M772.0 607.5L772.5 620.1L791.6 621.1Z" fill="#8d8d8d"/>
<path d="M793.5 622.4L791.6 621.1L772.5 620.1L773.1 632.8L780.0 633.0L781.5 632.9Z" fill="#777777"/>
<path d="M773.4 640.0L781.5 632.9L780.0 633.0L773.1 632.8Z" fill="#8d8d8d"/>
<path d="M836.7 570.6L812.9 575.9L820.2 591.3L827.0 590.7Z" fill="#a7a7a7"/>
<path d="M823.5 598.1L827.0 590.7L820.2 591.3Z" fill="#8e8e8e"/>
<path d="M812.9 575.9L797.3 596.0L800.0 596.0L817.5 591.5L820.2 591.3Z" fill="#a2a2a2"/>
<path d="M796.7 596.8L823.5 598.1L820.2 591.3L817.5 591.5L800.0 596.0L797.3 596.0Z" fill="#919191"/>
<path d="M836.7 570.6L820.7 550.5L812.9 575.9Z" fill="#afafaf"/>
<path d="M820.7 550.5L789.4 553.8L812.9 575.9Z" fill="#b6b6b6"/>
<path d="M773.3 539.1L771.7 566.2L789.4 553.8Z" fill="#adadad"/>
<path d="M748.6 544.5L771.7 566.2L773.3 539.1Z" fill="#a5a5a5"/>
<path d="M755.9 582.3L771.7 566.2L734.0 567.4Z" fill="#aaaaaa"/>
<path d="M748.6 544.5L734.0 567.4L771.7 566.2Z" fill="#acacac"/>
<path d="M771.7 566.2L755.9 582.3L763.7 594.6L771.9 595.3Z" fill="#a3a3a3"/>
<path d="M772.0 607.5L771.9 595.3L763.7 594.6Z" fill="#898989"/>
<path d="M771.7 566.2L771.9 595.3L780.0 596.0L796.0 596.0Z" fill="#a1a1a1"/>
<path d="M772.0 607.5L796.7 596.8L796.0 596.0L780.0 596.0L771.9 595.3Z" fill="#878787"/>
<path d="M812.9 575.9L771.7 566.2L796.0 596.0L797.3 596.0Z" fill="#aaaaaa"/>
<path d="M796.7 596.8L797.3 596.0L796.0 596.0Z" fill="#8e8e8e"/>
<path d="M789.4 553.8L771.7 566.2L812.9 575.9Z" fill="#a9a9a9"/>
<path d="M971.0 535.6L980.9 523.5L966.4 515.6Z" fill="#9f9f9f"/>
<path d="M971.0 535.6L966.4 515.6L957.5 526.6Z" fill="#a3a3a3"/>
<path d="M980.9 523.5L977.7 508.5L966.4 515.6Z" fill="#9e9e9e"/>
<path d="M951.8 515.4L957.5 526.6L966.4 515.6Z" fill="#9f9f9f"/>
<path d="M970.8 499.1L977.7 508.5L984.0 495.2L983.9 494.9Z" fill="#999999"/>
<path d="M977.1 486.5L970.8 499.1L983.9 494.9L983.8 494.8L983.8 494.7L983.0 493.5Z" fill="#9e9e9e"/>
<path d="M966.5 488.6L970.8 499.1L977.1 486.5Z" fill="#9f9f9f"/>
<path d="M977.7 508.5L970.8 499.1L966.4 515.6Z" fill="#8f8f8f"/>
<path d="M859.8 503.3L844.9 507.6L854.1 511.3Z" fill="#a5a5a5"/>
<path d="M859.8 503.3L854.1 511.3L872.3 508.4Z" fill="#b8b8b8"/>
<path d="M844.9 507.6L835.7 515.9L848.1 526.5Z" fill="#b8b8b8"/>
<path d="M844.9 507.6L848.1 526.5L854.1 511.3Z" fill="#b6b6b6"/>
<path d="M855.3 521.4L854.1 511.3L848.1 526.5Z" fill="#b1b1b1"/>
<path d="M889.6 516.7L872.3 508.4L875.8 519.6Z" fill="#bababa"/>
<path d="M889.6 516.7L875.8 519.6L885.1 524.9Z" fill="#b5b5b5"/>
<path d="M859.8 503.3L842.6 498.5L844.9 507.6Z" fill="#b4b4b4"/>
<path d="M832.3 504.5L844.9 507.6L842.6 498.5Z" fill="#b8b8b8"/>
<path d="M782.8 436.8L767.9 444.5L781.5 448.0Z" fill="#b2b2b2"/>
<path d="M634.1 519.6L650.1 515.8L644.0 509.2L640.7 510.2Z" fill="#8f8f8f"/>
<path d="M634.1 519.6L640.7 510.2L634.6 512.1L625.9 514.3Z" fill="#8c8c8c"/>
<path d="M635.1 533.1L649.6 532.4L634.1 519.6Z" fill="#8c8c8c"/>
<path d="M649.6 532.4L650.1 515.8L634.1 519.6Z" fill="#8f8f8f"/>
<path d="M622.8 526.7L634.1 519.6L625.9 514.3L623.0 515.0Z" fill="#858585"/>
<path d="M635.1 533.1L634.1 519.6L622.8 526.7Z" fill="#838383"/>
<path d="M703.4 545.3L704.1 523.8L685.9 522.6Z" fill="#bababa"/>
<path d="M694.4 511.8L685.9 522.6L704.1 523.8Z" fill="#b1b1b1"/>
<path d="M703.4 545.3L726.9 540.2L704.1 523.8Z" fill="#b9b9b9"/>
<path d="M726.9 540.2L720.3 511.4L704.1 523.8Z" fill="#adadad"/>
<path d="M694.4 511.8L704.1 523.8L705.5 502.3Z" fill="#b5b5b5"/>
<path d="M720.3 511.4L705.5 502.3L704.1 523.8Z" fill="#b6b6b6"/>
<path d="M723.9 451.3L715.5 460.0L724.2 464.4Z" fill="#b6b6b6"/>
<path d="M723.9 451.3L710.0 448.9L715.5 460.0Z" fill="#bcbcbc"/>
<path d="M710.0 448.9L708.2 464.6L715.5 460.0Z" fill="#ababab"/>
<path d="M723.9 451.3L729.9 457.0L735.0 449.0Z" fill="#b1b1b1"/>
<path d="M723.9 451.3L724.2 464.4L729.9 457.0Z" fill="#b8b8b8"/>
<path d="M719.9 489.2L718.0 476.4L701.4 484.4Z" fill="#b0b0b0"/>
<path d="M708.2 464.6L718.0 476.4L715.5 460.0Z" fill="#bbbbbb"/>
<path d="M724.2 464.4L715.5 460.0L718.0 476.4Z" fill="#b3b3b3"/>
<path d="M916.9 515.0L919.5 524.9L928.1 517.1Z" fill="#ababab"/>
<path d="M889.6 516.7L885.1 524.9L896.0 532.1Z" fill="#b7b7b7"/>
<path d="M918.7 586.4L909.9 588.6L917.0 595.4L919.9 594.5Z" fill="#7b7b7b"/>
<path d="M920.5 598.8L919.9 594.5L917.0 595.4Z" fill="#646464"/>
<path d="M932.0 583.3L918.7 586.4L919.9 594.5L924.9 592.9Z" fill="#7f7f7f"/>
<path d="M920.5 598.8L924.9 592.9L919.9 594.5Z" fill="#646464"/>
<path d="M919.3 577.3L918.9 583.9L928.5 581.7Z" fill="#919191"/>
<path d="M918.7 586.4L932.0 583.3L928.5 581.7L918.9 583.9Z" fill="#787878"/>
<path d="M914.5 563.4L919.3 577.3L926.6 567.5Z" fill="#8d8d8d"/>
<path d="M926.6 567.5L919.3 577.3L928.5 581.7L931.2 581.1Z" fill="#909090"/>
<path d="M932.0 583.3L931.2 581.1L928.5 581.7Z" fill="#767676"/>
<path d="M957.9 536.2L957.5 526.6L947.2 528.4Z" fill="#9d9d9d"/>
<path d="M957.9 536.2L947.2 528.4L942.0 537.2Z" fill="#8f8f8f"/>
<path d="M951.8 515.4L939.1 518.9L947.2 528.4Z" fill="#a7a7a7"/>
<path d="M951.8 515.4L947.2 528.4L957.5 526.6Z" fill="#949494"/>
<path d="M937.6 457.7L945.0 454.0L943.0 452.4L937.7 447.1Z" fill="#9d9d9d"/>
<path d="M935.9 466.6L943.1 473.0L937.6 457.7Z" fill="#939393"/>
<path d="M916.9 515.0L928.1 517.1L919.0 504.5Z" fill="#9c9c9c"/>
<path d="M916.9 515.0L919.0 504.5L907.3 511.8Z" fill="#a0a0a0"/>
<path d="M902.0 502.8L907.3 511.8L919.0 504.5Z" fill="#aaaaaa"/>
<path d="M928.1 517.1L939.1 518.9L939.1 509.0Z" fill="#959595"/>
<path d="M928.1 517.1L939.1 509.0L919.0 504.5Z" fill="#929292"/>
<path d="M930.1 494.2L919.0 504.5L939.1 509.0Z" fill="#a6a6a6"/>
<path d="M951.8 515.4L939.1 509.0L939.1 518.9Z" fill="#a5a5a5"/>
<path d="M951.8 515.4L948.5 501.5L939.1 509.0Z" fill="#a1a1a1"/>
<path d="M871.1 541.2L866.2 547.7L880.3 546.3Z" fill="#bababa"/>
<path d="M866.2 547.7L877.6 557.2L880.3 546.3Z" fill="#a2a2a2"/>
<path d="M871.1 541.2L880.3 546.3L878.9 537.6Z" fill="#b9b9b9"/>
<path d="M832.5 537.6L838.3 550.0L845.2 535.6Z" fill="#b3b3b3"/>
<path d="M838.3 550.0L854.4 543.3L845.2 535.6Z" fill="#b4b4b4"/>
<path d="M871.1 541.2L861.1 537.8L866.2 547.7Z" fill="#adadad"/>
<path d="M866.2 547.7L861.1 537.8L854.4 543.3Z" fill="#b1b1b1"/>
<path d="M755.9 582.3L734.7 589.2L753.7 593.5Z" fill="#9d9d9d"/>
<path d="M723.1 593.0L750.5 609.5L753.7 593.5L734.7 589.2Z" fill="#8c8c8c"/>
<path d="M755.9 582.3L753.7 593.5L755.0 593.8L763.7 594.6Z" fill="#979797"/>
<path d="M750.5 609.5L772.0 607.5L763.7 594.6L755.0 593.8L753.7 593.5Z" fill="#808080"/>
<path d="M750.5 609.5L723.1 593.0L722.7 610.5L740.0 614.0L741.7 614.3Z" fill="#888888"/>
<path d="M722.4 624.8L741.7 614.3L740.0 614.0L722.7 610.5Z" fill="#757575"/>
<path d="M750.5 609.5L741.7 614.3L748.6 615.7Z" fill="#8f8f8f"/>
<path d="M748.6 615.7L741.7 614.3L722.4 624.8L727.2 629.1L743.9 631.0Z" fill="#777777"/>
<path d="M740.6 641.4L743.9 631.0L727.2 629.1Z" fill="#909090"/>
<path d="M750.5 609.5L748.6 615.7L756.3 617.3Z" fill="#888888"/>
<path d="M756.3 617.3L748.6 615.7L743.9 631.0L758.0 632.5L767.9 632.7Z" fill="#747474"/>
<path d="M740.6 641.4L773.4 640.0L767.9 632.7L758.0 632.5L743.9 631.0Z" fill="#858585"/>
<path d="M772.0 607.5L750.5 609.5L756.3 617.3L770.0 620.0L772.5 620.1Z" fill="#8a8a8a"/>
<path d="M772.5 620.1L770.0 620.0L756.3 617.3L767.9 632.7L773.1 632.8Z" fill="#6f6f6f"/>
<path d="M773.4 640.0L773.1 632.8L767.9 632.7Z" fill="#878787"/>
<path d="M938.4 487.0L947.6 487.3L943.1 473.0Z" fill="#9f9f9f"/>
<path d="M966.4 515.6L970.8 499.1L958.9 507.4Z" fill="#a6a6a6"/>
<path d="M951.8 515.4L966.4 515.6L958.9 507.4Z" fill="#aaaaaa"/>
<path d="M951.8 515.4L958.9 507.4L948.5 501.5Z" fill="#8d8d8d"/>
<path d="M872.3 508.4L854.1 511.3L867.9 522.1Z" fill="#b2b2b2"/>
<path d="M855.3 521.4L867.9 522.1L854.1 511.3Z" fill="#b4b4b4"/>
<path d="M872.3 508.4L867.9 522.1L875.8 519.6Z" fill="#b4b4b4"/>
<path d="M830.8 524.0L839.2 525.8L835.7 515.9Z" fill="#afafaf"/>
<path d="M835.7 515.9L839.2 525.8L848.1 526.5Z" fill="#b8b8b8"/>
<path d="M848.1 526.5L839.2 525.8L845.2 535.6Z" fill="#b5b5b5"/>
<path d="M832.5 537.6L839.2 525.8L830.8 524.0Z" fill="#b9b9b9"/>
<path d="M832.5 537.6L845.2 535.6L839.2 525.8Z" fill="#b1b1b1"/>
<path d="M857.8 466.9L855.3 488.1L870.8 485.8Z" fill="#bababa"/>
<path d="M859.8 503.3L870.8 485.8L855.3 488.1Z" fill="#b9b9b9"/>
<path d="M859.8 503.3L855.3 488.1L842.6 498.5Z" fill="#afafaf"/>
<path d="M842.6 498.5L855.3 488.1L842.1 488.6Z" fill="#b0b0b0"/>
<path d="M857.8 466.9L836.4 463.8L842.1 488.6Z" fill="#acacac"/>
<path d="M857.8 466.9L842.1 488.6L855.3 488.1Z" fill="#b7b7b7"/>
<path d="M767.9 444.5L755.1 450.2L764.8 452.5Z" fill="#a2a2a2"/>
<path d="M806.9 520.3L816.9 510.9L796.9 498.3Z" fill="#bababa"/>
<path d="M719.9 489.2L720.3 511.4L736.8 495.7Z" fill="#b1b1b1"/>
<path d="M782.8 436.8L794.2 452.9L805.5 444.3Z" fill="#b5b5b5"/>
<path d="M782.8 436.8L781.5 448.0L794.2 452.9Z" fill="#bbbbbb"/>
<path d="M880.7 466.1L901.0 479.6L900.1 457.3Z" fill="#b3b3b3"/>
<path d="M900.1 457.3L901.0 479.6L908.5 471.9Z" fill="#b3b3b3"/>
<path d="M880.7 466.1L870.8 485.8L901.0 479.6Z" fill="#b6b6b6"/>
<path d="M889.4 499.3L901.0 479.6L870.8 485.8Z" fill="#b3b3b3"/>
<path d="M900.1 457.3L908.5 471.9L909.9 460.0Z" fill="#aeaeae"/>
<path d="M916.6 453.0L904.8 448.6L909.9 460.0Z" fill="#b7b7b7"/>
<path d="M904.8 448.6L900.1 457.3L909.9 460.0Z" fill="#a8a8a8"/>
<path d="M938.4 487.0L943.1 473.0L933.4 477.7Z" fill="#a8a8a8"/>
<path d="M935.9 466.6L933.4 477.7L943.1 473.0Z" fill="#aaaaaa"/>
<path d="M696.3 491.4L701.4 484.4L688.7 483.0Z" fill="#adadad"/>
<path d="M696.3 491.4L713.1 494.9L701.4 484.4Z" fill="#c0c0c0"/>
<path d="M696.3 491.4L705.5 502.3L713.1 494.9Z" fill="#bfbfbf"/>
<path d="M719.9 489.2L701.4 484.4L713.1 494.9Z" fill="#bababa"/>
<path d="M719.9 489.2L713.1 494.9L720.3 511.4Z" fill="#b5b5b5"/>
<path d="M720.3 511.4L713.1 494.9L705.5 502.3Z" fill="#bebebe"/>
<path d="M694.4 511.8L705.5 502.3L688.1 500.0Z" fill="#b7b7b7"/>
<path d="M696.3 491.4L688.1 500.0L705.5 502.3Z" fill="#b6b6b6"/>
<path d="M694.4 511.8L679.3 510.4L685.9 522.6Z" fill="#afafaf"/>
<path d="M694.4 511.8L688.1 500.0L679.3 510.4Z" fill="#b2b2b2"/>
<path d="M680.0 501.0L679.3 510.4L688.1 500.0Z" fill="#b0b0b0"/>
<path d="M668.9 518.5L685.9 522.6L679.3 510.4Z" fill="#b7b7b7"/>
<path d="M735.0 449.0L729.9 457.0L734.5 464.2Z" fill="#b8b8b8"/>
<path d="M748.6 458.0L735.0 449.0L734.5 464.2Z" fill="#b5b5b5"/>
<path d="M748.6 458.0L734.5 464.2L744.2 464.9Z" fill="#b6b6b6"/>
<path d="M736.8 472.6L744.2 464.9L734.5 464.2Z" fill="#b1b1b1"/>
<path d="M736.8 472.6L734.5 464.2L724.2 464.4Z" fill="#bcbcbc"/>
<path d="M724.2 464.4L734.5 464.2L729.9 457.0Z" fill="#b0b0b0"/>
<path d="M708.2 464.6L702.5 470.7L718.0 476.4Z" fill="#bababa"/>
<path d="M701.4 484.4L718.0 476.4L702.5 470.7Z" fill="#adadad"/>
<path d="M701.4 484.4L702.5 470.7L688.7 483.0Z" fill="#b6b6b6"/>
<path d="M697.7 457.6L702.5 470.7L708.2 464.6Z" fill="#b5b5b5"/>
<path d="M697.7 457.6L688.7 483.0L702.5 470.7Z" fill="#b2b2b2"/>
<path d="M736.8 472.6L724.2 464.4L730.2 479.5Z" fill="#bcbcbc"/>
<path d="M724.2 464.4L718.0 476.4L730.2 479.5Z" fill="#bcbcbc"/>
<path d="M719.9 489.2L730.2 479.5L718.0 476.4Z" fill="#b9b9b9"/>
<path d="M719.9 489.2L736.8 495.7L730.2 479.5Z" fill="#bbbbbb"/>
<path d="M914.5 563.4L907.6 553.9L901.8 561.8Z" fill="#949494"/>
<path d="M889.8 564.5L898.1 576.7L901.8 561.8Z" fill="#a6a6a6"/>
<path d="M895.7 542.0L904.7 543.8L896.0 532.1Z" fill="#b6b6b6"/>
<path d="M895.7 542.0L896.0 532.1L887.1 539.3Z" fill="#aaaaaa"/>
<path d="M878.9 537.6L880.3 546.3L887.1 539.3Z" fill="#b6b6b6"/>
<path d="M885.1 524.9L878.9 537.6L887.1 539.3Z" fill="#b2b2b2"/>
<path d="M885.1 524.9L887.1 539.3L896.0 532.1Z" fill="#b2b2b2"/>
<path d="M896.0 532.1L904.7 543.8L908.9 535.3Z" fill="#adadad"/>
<path d="M948.0 576.7L937.9 574.8L934.0 580.4L945.1 577.9Z" fill="#808080"/>
<path d="M932.0 583.3L945.1 577.9L934.0 580.4Z" fill="#757575"/>
<path d="M937.9 574.8L926.6 567.5L931.2 581.1L934.0 580.4Z" fill="#949494"/>
<path d="M932.0 583.3L934.0 580.4L931.2 581.1Z" fill="#767676"/>
<path d="M948.0 576.7L950.9 566.8L937.9 574.8Z" fill="#949494"/>
<path d="M922.1 445.7L927.6 453.5L937.6 447.0L937.6 447.0Z" fill="#b1b1b1"/>
<path d="M927.6 453.5L937.6 457.7L937.7 447.1L937.6 447.0Z" fill="#acacac"/>
<path d="M916.6 453.0L927.6 453.5L922.1 445.7Z" fill="#b0b0b0"/>
<path d="M935.9 466.6L937.6 457.7L927.6 453.5Z" fill="#acacac"/>
<path d="M937.6 457.7L954.3 466.6L949.8 457.8L945.0 454.0Z" fill="#a4a4a4"/>
<path d="M937.6 457.7L943.1 473.0L954.3 466.6Z" fill="#9c9c9c"/>
<path d="M930.1 494.2L939.1 509.0L940.7 495.8Z" fill="#acacac"/>
<path d="M948.5 501.5L940.7 495.8L939.1 509.0Z" fill="#9c9c9c"/>
<path d="M938.4 487.0L930.1 494.2L940.7 495.8Z" fill="#a6a6a6"/>
<path d="M938.4 487.0L940.7 495.8L947.6 487.3Z" fill="#a5a5a5"/>
<path d="M948.5 501.5L947.6 487.3L940.7 495.8Z" fill="#a7a7a7"/>
<path d="M889.8 564.5L887.3 553.4L877.6 557.2Z" fill="#ababab"/>
<path d="M877.6 557.2L887.3 553.4L880.3 546.3Z" fill="#a8a8a8"/>
<path d="M895.7 542.0L887.1 539.3L887.3 553.4Z" fill="#a4a4a4"/>
<path d="M880.3 546.3L887.3 553.4L887.1 539.3Z" fill="#b8b8b8"/>
<path d="M948.5 501.5L956.1 491.3L947.6 487.3Z" fill="#a1a1a1"/>
<path d="M948.5 501.5L958.9 507.4L956.1 491.3Z" fill="#a8a8a8"/>
<path d="M966.5 488.6L956.1 491.3L970.8 499.1Z" fill="#a1a1a1"/>
<path d="M970.8 499.1L956.1 491.3L958.9 507.4Z" fill="#9b9b9b"/>
<path d="M855.3 521.4L858.1 529.3L867.9 522.1Z" fill="#b6b6b6"/>
<path d="M855.3 521.4L848.1 526.5L858.1 529.3Z" fill="#bfbfbf"/>
<path d="M848.1 526.5L845.2 535.6L858.1 529.3Z" fill="#b6b6b6"/>
<path d="M854.4 543.3L858.1 529.3L845.2 535.6Z" fill="#bababa"/>
<path d="M854.4 543.3L861.1 537.8L858.1 529.3Z" fill="#b8b8b8"/>
<path d="M871.1 541.2L875.1 530.3L861.1 537.8Z" fill="#adadad"/>
<path d="M871.1 541.2L878.9 537.6L875.1 530.3Z" fill="#b0b0b0"/>
<path d="M861.1 537.8L875.1 530.3L858.1 529.3Z" fill="#b7b7b7"/>
<path d="M867.9 522.1L858.1 529.3L875.1 530.3Z" fill="#b5b5b5"/>
<path d="M875.8 519.6L867.9 522.1L875.1 530.3Z" fill="#bbbbbb"/>
<path d="M885.1 524.9L875.1 530.3L878.9 537.6Z" fill="#b8b8b8"/>
<path d="M885.1 524.9L875.8 519.6L875.1 530.3Z" fill="#acacac"/>
<path d="M836.4 463.8L828.6 476.7L842.1 488.6Z" fill="#aeaeae"/>
<path d="M820.8 459.4L828.6 476.7L836.4 463.8Z" fill="#b4b4b4"/>
<path d="M842.6 498.5L842.1 488.6L834.1 494.8Z" fill="#b3b3b3"/>
<path d="M832.3 504.5L834.1 494.8L824.6 495.2Z" fill="#bcbcbc"/>
<path d="M832.3 504.5L842.6 498.5L834.1 494.8Z" fill="#a7a7a7"/>
<path d="M824.6 495.2L834.1 494.8L828.6 476.7Z" fill="#b5b5b5"/>
<path d="M842.1 488.6L828.6 476.7L834.1 494.8Z" fill="#b5b5b5"/>
<path d="M806.9 520.3L796.9 498.3L789.8 513.1Z" fill="#c4c4c4"/>
<path d="M801.5 535.5L806.9 520.3L789.8 513.1Z" fill="#c0c0c0"/>
<path d="M801.5 535.5L789.8 513.1L773.3 539.1Z" fill="#b3b3b3"/>
<path d="M780.2 491.3L789.8 513.1L796.9 498.3Z" fill="#bbbbbb"/>
<path d="M819.7 503.2L807.2 494.4L816.9 510.9Z" fill="#b6b6b6"/>
<path d="M816.9 510.9L807.2 494.4L796.9 498.3Z" fill="#bababa"/>
<path d="M780.2 491.3L770.9 480.9L761.3 492.1Z" fill="#b5b5b5"/>
<path d="M902.0 502.8L901.6 492.9L889.4 499.3Z" fill="#b0b0b0"/>
<path d="M889.4 499.3L901.6 492.9L901.0 479.6Z" fill="#b5b5b5"/>
<path d="M908.5 471.9L920.2 465.2L909.9 460.0Z" fill="#ababab"/>
<path d="M935.9 466.6L927.6 453.5L920.2 465.2Z" fill="#afafaf"/>
<path d="M916.6 453.0L909.9 460.0L920.2 465.2Z" fill="#b1b1b1"/>
<path d="M916.6 453.0L920.2 465.2L927.6 453.5Z" fill="#ababab"/>
<path d="M664.6 500.5L673.0 493.2L672.2 493.6L667.1 498.1L662.7 500.8Z" fill="#a7a7a7"/>
<path d="M673.0 493.2L674.6 490.8L672.9 493.0L672.2 493.6Z" fill="#9e9e9e"/>
<path d="M697.7 457.6L694.8 460.6L691.1 467.1Z" fill="#a6a6a6"/>
<path d="M680.0 501.0L688.1 500.0L680.7 487.1Z" fill="#b2b2b2"/>
<path d="M680.0 501.0L680.7 487.1L673.0 493.2Z" fill="#b3b3b3"/>
<path d="M696.3 491.4L688.7 483.0L680.7 487.1Z" fill="#a8a8a8"/>
<path d="M696.3 491.4L680.7 487.1L688.1 500.0Z" fill="#9f9f9f"/>
<path d="M697.7 457.6L680.7 487.1L688.7 483.0Z" fill="#b5b5b5"/>
<path d="M673.0 493.2L680.7 487.1L697.7 457.6L691.1 467.1L690.7 467.7L678.8 485.6L674.6 490.8Z" fill="#ababab"/>
<path d="M660.1 509.8L668.9 518.5L672.0 506.6Z" fill="#a4a4a4"/>
<path d="M668.9 518.5L679.3 510.4L672.0 506.6Z" fill="#a7a7a7"/>
<path d="M664.6 500.5L660.1 509.8L672.0 506.6Z" fill="#ababab"/>
<path d="M680.0 501.0L672.0 506.6L679.3 510.4Z" fill="#aeaeae"/>
<path d="M664.6 500.5L672.0 506.6L673.0 493.2Z" fill="#969696"/>
<path d="M680.0 501.0L673.0 493.2L672.0 506.6Z" fill="#989898"/>
<path d="M914.5 563.4L901.8 561.8L908.5 575.5Z" fill="#a5a5a5"/>
<path d="M898.1 576.7L908.5 575.5L901.8 561.8Z" fill="#9b9b9b"/>
<path d="M914.5 563.4L908.5 575.5L919.3 577.3Z" fill="#a2a2a2"/>
<path d="M908.5 575.5L898.1 576.7L906.6 585.3L909.5 585.1Z" fill="#989898"/>
<path d="M909.9 588.6L909.5 585.1L906.6 585.3Z" fill="#818181"/>
<path d="M908.5 575.5L909.5 585.1L915.0 584.8L916.8 584.4Z" fill="#989898"/>
<path d="M909.9 588.6L918.7 586.4L916.8 584.4L915.0 584.8L909.5 585.1Z" fill="#7f7f7f"/>
<path d="M919.3 577.3L908.5 575.5L916.8 584.4L918.9 583.9Z" fill="#999999"/>
<path d="M918.7 586.4L918.9 583.9L916.8 584.4Z" fill="#818181"/>
<path d="M914.5 563.4L920.1 549.5L907.6 553.9Z" fill="#a4a4a4"/>
<path d="M914.5 563.4L926.6 567.5L920.1 549.5Z" fill="#afafaf"/>
<path d="M942.0 537.2L927.8 529.4L928.9 545.5Z" fill="#a8a8a8"/>
<path d="M928.1 517.1L919.5 524.9L927.8 529.4Z" fill="#b2b2b2"/>
<path d="M928.1 517.1L927.8 529.4L939.1 518.9Z" fill="#9f9f9f"/>
<path d="M939.1 518.9L927.8 529.4L947.2 528.4Z" fill="#adadad"/>
<path d="M942.0 537.2L947.2 528.4L927.8 529.4Z" fill="#a6a6a6"/>
<path d="M926.6 567.5L937.9 574.8L939.5 561.8Z" fill="#999999"/>
<path d="M950.1 556.4L939.5 561.8L950.9 566.8Z" fill="#9e9e9e"/>
<path d="M950.9 566.8L939.5 561.8L937.9 574.8Z" fill="#959595"/>
<path d="M896.0 532.1L908.9 535.3L904.9 526.5Z" fill="#b2b2b2"/>
<path d="M889.6 516.7L904.9 526.5L907.3 511.8Z" fill="#b1b1b1"/>
<path d="M889.6 516.7L896.0 532.1L904.9 526.5Z" fill="#b4b4b4"/>
<path d="M919.5 524.9L904.9 526.5L908.9 535.3Z" fill="#a7a7a7"/>
<path d="M916.9 515.0L907.3 511.8L904.9 526.5Z" fill="#adadad"/>
<path d="M916.9 515.0L904.9 526.5L919.5 524.9Z" fill="#acacac"/>
<path d="M967.1 477.1L977.1 486.5L953.8 460.2L952.8 459.7Z" fill="#a3a3a3"/>
<path d="M954.3 466.6L967.1 477.1L952.8 459.7L950.3 458.3L949.8 457.8Z" fill="#aaaaaa"/>
<path d="M966.5 488.6L977.1 486.5L967.1 477.1Z" fill="#9d9d9d"/>
<path d="M943.1 473.0L947.6 487.3L953.0 479.7Z" fill="#9b9b9b"/>
<path d="M943.1 473.0L953.0 479.7L954.3 466.6Z" fill="#a7a7a7"/>
<path d="M954.3 466.6L953.0 479.7L967.1 477.1Z" fill="#acacac"/>
<path d="M947.6 487.3L956.1 491.3L953.0 479.7Z" fill="#a4a4a4"/>
<path d="M966.5 488.6L953.0 479.7L956.1 491.3Z" fill="#9b9b9b"/>
<path d="M966.5 488.6L967.1 477.1L953.0 479.7Z" fill="#a1a1a1"/>
<path d="M889.8 564.5L901.8 561.8L896.8 553.7Z" fill="#a7a7a7"/>
<path d="M889.8 564.5L896.8 553.7L887.3 553.4Z" fill="#a7a7a7"/>
<path d="M907.6 553.9L896.8 553.7L901.8 561.8Z" fill="#a9a9a9"/>
<path d="M895.7 542.0L887.3 553.4L896.8 553.7Z" fill="#b0b0b0"/>
<path d="M895.7 542.0L896.8 553.7L904.7 543.8Z" fill="#afafaf"/>
<path d="M907.6 553.9L904.7 543.8L896.8 553.7Z" fill="#aaaaaa"/>
<path d="M770.9 480.9L762.8 469.3L761.3 492.1Z" fill="#a8a8a8"/>
<path d="M767.9 444.5L775.7 456.7L781.5 448.0Z" fill="#a6a6a6"/>
<path d="M767.9 444.5L764.8 452.5L775.7 456.7Z" fill="#aeaeae"/>
<path d="M770.9 480.9L773.1 465.7L762.8 469.3Z" fill="#bababa"/>
<path d="M819.7 503.2L824.6 495.2L815.7 495.1Z" fill="#b3b3b3"/>
<path d="M819.7 503.2L815.7 495.1L807.2 494.4Z" fill="#b7b7b7"/>
<path d="M780.2 491.3L768.2 518.2L789.8 513.1Z" fill="#bababa"/>
<path d="M780.2 491.3L761.3 492.1L768.2 518.2Z" fill="#aaaaaa"/>
<path d="M773.3 539.1L789.8 513.1L768.2 518.2Z" fill="#b6b6b6"/>
<path d="M748.6 544.5L773.3 539.1L768.2 518.2Z" fill="#a7a7a7"/>
<path d="M736.8 472.6L742.0 482.0L744.2 464.9Z" fill="#b9b9b9"/>
<path d="M752.9 466.2L744.2 464.9L742.0 482.0Z" fill="#bbbbbb"/>
<path d="M736.8 495.7L761.3 492.1L742.0 482.0Z" fill="#b7b7b7"/>
<path d="M752.9 466.2L742.0 482.0L762.8 469.3Z" fill="#b7b7b7"/>
<path d="M761.3 492.1L762.8 469.3L742.0 482.0Z" fill="#b8b8b8"/>
<path d="M736.8 472.6L730.2 479.5L742.0 482.0Z" fill="#c1c1c1"/>
<path d="M736.8 495.7L742.0 482.0L730.2 479.5Z" fill="#c1c1c1"/>
<path d="M902.0 502.8L919.0 504.5L916.4 491.1Z" fill="#acacac"/>
<path d="M902.0 502.8L916.4 491.1L901.6 492.9Z" fill="#b4b4b4"/>
<path d="M930.1 494.2L916.4 491.1L919.0 504.5Z" fill="#a6a6a6"/>
<path d="M926.6 567.5L932.8 554.0L920.1 549.5Z" fill="#9c9c9c"/>
<path d="M928.9 545.5L920.1 549.5L932.8 554.0Z" fill="#9d9d9d"/>
<path d="M926.6 567.5L939.5 561.8L932.8 554.0Z" fill="#9c9c9c"/>
<path d="M907.6 553.9L915.3 542.6L904.7 543.8Z" fill="#9c9c9c"/>
<path d="M907.6 553.9L920.1 549.5L915.3 542.6Z" fill="#a9a9a9"/>
<path d="M904.7 543.8L915.3 542.6L908.9 535.3Z" fill="#b2b2b2"/>
<path d="M919.5 524.9L908.9 535.3L915.3 542.6Z" fill="#aeaeae"/>
<path d="M919.5 524.9L915.3 542.6L927.8 529.4Z" fill="#aeaeae"/>
<path d="M928.9 545.5L915.3 542.6L920.1 549.5Z" fill="#a5a5a5"/>
<path d="M928.9 545.5L927.8 529.4L915.3 542.6Z" fill="#acacac"/>
<path d="M752.9 466.2L762.8 469.3L761.2 461.0Z" fill="#a5a5a5"/>
<path d="M755.1 450.2L761.2 461.0L764.8 452.5Z" fill="#b0b0b0"/>
<path d="M762.8 469.3L773.1 465.7L761.2 461.0Z" fill="#b5b5b5"/>
<path d="M748.6 458.0L752.9 466.2L761.2 461.0Z" fill="#a9a9a9"/>
<path d="M748.6 458.0L761.2 461.0L755.1 450.2Z" fill="#9e9e9e"/>
<path d="M764.8 452.5L761.2 461.0L775.7 456.7Z" fill="#bababa"/>
<path d="M775.7 456.7L761.2 461.0L773.1 465.7Z" fill="#aeaeae"/>
<path d="M807.2 494.4L815.7 495.1L809.4 482.7Z" fill="#b6b6b6"/>
<path d="M748.6 544.5L768.2 518.2L739.3 519.2Z" fill="#bdbdbd"/>
<path d="M748.6 544.5L739.3 519.2L726.9 540.2Z" fill="#bababa"/>
<path d="M726.9 540.2L739.3 519.2L720.3 511.4Z" fill="#bfbfbf"/>
<path d="M720.3 511.4L739.3 519.2L736.8 495.7Z" fill="#b8b8b8"/>
<path d="M736.8 495.7L739.3 519.2L761.3 492.1Z" fill="#a7a7a7"/>
<path d="M761.3 492.1L739.3 519.2L768.2 518.2Z" fill="#bcbcbc"/>
<path d="M930.1 494.2L925.3 483.9L916.4 491.1Z" fill="#aeaeae"/>
<path d="M938.4 487.0L925.3 483.9L930.1 494.2Z" fill="#9c9c9c"/>
<path d="M938.4 487.0L933.4 477.7L925.3 483.9Z" fill="#a7a7a7"/>
<path d="M950.1 556.4L942.1 552.0L939.5 561.8Z" fill="#9a9a9a"/>
<path d="M939.5 561.8L942.1 552.0L932.8 554.0Z" fill="#9e9e9e"/>
<path d="M950.1 556.4L953.4 545.9L942.1 552.0Z" fill="#979797"/>
<path d="M953.4 545.9L942.0 537.2L942.1 552.0Z" fill="#919191"/>
<path d="M942.0 537.2L928.9 545.5L942.1 552.0Z" fill="#adadad"/>
<path d="M928.9 545.5L932.8 554.0L942.1 552.0Z" fill="#9c9c9c"/>
<path d="M804.1 476.5L798.1 486.8L809.4 482.7Z" fill="#bcbcbc"/>
<path d="M780.2 491.3L796.9 498.3L798.1 486.8Z" fill="#b7b7b7"/>
<path d="M796.9 498.3L807.2 494.4L798.1 486.8Z" fill="#aeaeae"/>
<path d="M807.2 494.4L809.4 482.7L798.1 486.8Z" fill="#bcbcbc"/>
<path d="M824.6 495.2L818.5 486.8L815.7 495.1Z" fill="#adadad"/>
<path d="M815.7 495.1L818.5 486.8L809.4 482.7Z" fill="#b2b2b2"/>
<path d="M824.6 495.2L828.6 476.7L818.5 486.8Z" fill="#b8b8b8"/>
<path d="M794.2 452.9L784.4 461.8L790.5 467.2Z" fill="#bcbcbc"/>
<path d="M781.5 448.0L784.4 461.8L794.2 452.9Z" fill="#b7b7b7"/>
<path d="M781.5 448.0L775.7 456.7L784.4 461.8Z" fill="#b0b0b0"/>
<path d="M775.7 456.7L773.1 465.7L784.4 461.8Z" fill="#b9b9b9"/>
<path d="M804.1 476.5L811.3 467.3L802.2 466.9Z" fill="#bbbbbb"/>
<path d="M804.1 476.5L802.2 466.9L790.5 467.2Z" fill="#bbbbbb"/>
<path d="M794.2 452.9L790.5 467.2L802.2 466.9Z" fill="#acacac"/>
<path d="M916.4 491.1L925.3 483.9L913.9 480.2Z" fill="#acacac"/>
<path d="M908.5 471.9L901.0 479.6L913.9 480.2Z" fill="#9f9f9f"/>
<path d="M901.0 479.6L901.6 492.9L913.9 480.2Z" fill="#a9a9a9"/>
<path d="M901.6 492.9L916.4 491.1L913.9 480.2Z" fill="#acacac"/>
<path d="M804.1 476.5L790.5 467.2L789.4 479.7Z" fill="#b7b7b7"/>
<path d="M804.1 476.5L789.4 479.7L798.1 486.8Z" fill="#b9b9b9"/>
<path d="M780.2 491.3L798.1 486.8L789.4 479.7Z" fill="#b7b7b7"/>
<path d="M780.2 491.3L789.4 479.7L770.9 480.9Z" fill="#b5b5b5"/>
<path d="M828.6 476.7L816.2 476.3L818.5 486.8Z" fill="#b4b4b4"/>
<path d="M809.4 482.7L818.5 486.8L816.2 476.3Z" fill="#bcbcbc"/>
<path d="M820.8 459.4L816.2 476.3L828.6 476.7Z" fill="#bbbbbb"/>
<path d="M820.8 459.4L811.3 467.3L816.2 476.3Z" fill="#b0b0b0"/>
<path d="M804.1 476.5L816.2 476.3L811.3 467.3Z" fill="#b6b6b6"/>
<path d="M804.1 476.5L809.4 482.7L816.2 476.3Z" fill="#afafaf"/>
<path d="M773.1 465.7L781.4 469.3L784.4 461.8Z" fill="#b8b8b8"/>
<path d="M790.5 467.2L784.4 461.8L781.4 469.3Z" fill="#b0b0b0"/>
<path d="M790.5 467.2L781.4 469.3L789.4 479.7Z" fill="#b4b4b4"/>
<path d="M770.9 480.9L781.4 469.3L773.1 465.7Z" fill="#b6b6b6"/>
<path d="M770.9 480.9L789.4 479.7L781.4 469.3Z" fill="#b5b5b5"/>
<path d="M811.3 467.3L806.3 459.9L802.2 466.9Z" fill="#bdbdbd"/>
<path d="M805.5 444.3L806.3 459.9L820.8 459.4Z" fill="#bcbcbc"/>
<path d="M820.8 459.4L806.3 459.9L811.3 467.3Z" fill="#adadad"/>
<path d="M805.5 444.3L794.2 452.9L806.3 459.9Z" fill="#b7b7b7"/>
<path d="M794.2 452.9L802.2 466.9L806.3 459.9Z" fill="#b5b5b5"/>
<path d="M925.3 483.9L921.7 474.7L913.9 480.2Z" fill="#b0b0b0"/>
<path d="M933.4 477.7L921.7 474.7L925.3 483.9Z" fill="#acacac"/>
<path d="M908.5 471.9L921.7 474.7L920.2 465.2Z" fill="#a8a8a8"/>
<path d="M908.5 471.9L913.9 480.2L921.7 474.7Z" fill="#b0b0b0"/>
<path d="M935.9 466.6L921.7 474.7L933.4 477.7Z" fill="#aaaaaa"/>
<path d="M935.9 466.6L920.2 465.2L921.7 474.7Z" fill="#adadad"/>
</g>
<path d="M668.0 499.3C670.0 498.9 676.5 497.8 680.0 497.0C683.5 496.2 686.0 495.7 689.0 494.8C692.0 493.9 695.5 492.8 698.0 491.8C700.5 490.8 702.0 490.2 704.0 488.8C706.0 487.4 708.0 485.6 710.0 483.5C712.0 481.4 714.0 478.5 716.0 476.0C718.0 473.5 720.0 470.6 722.0 468.5C724.0 466.4 726.0 464.8 728.0 463.3C730.0 461.8 732.0 460.5 734.0 459.5C736.0 458.5 737.5 458.1 740.0 457.3C742.5 456.6 746.0 455.5 749.0 455.0C752.0 454.5 755.0 454.4 758.0 454.5C761.0 454.6 764.0 455.1 767.0 455.8C770.0 456.5 773.0 457.4 776.0 458.8C779.0 460.2 782.0 462.4 785.0 464.0C788.0 465.6 791.5 467.4 794.0 468.5C796.5 469.6 797.8 469.3 800.0 470.8C802.2 472.3 804.6 475.1 807.0 477.5C809.4 479.9 812.0 482.2 814.5 485.0C817.0 487.8 819.5 491.2 822.0 494.0C824.5 496.8 827.0 499.2 829.5 502.0C832.0 504.8 834.5 507.6 837.0 510.5C839.5 513.4 842.0 516.6 844.5 519.5C847.0 522.4 849.5 525.8 852.0 527.8C854.5 529.8 856.8 530.8 859.5 531.5C862.2 532.2 865.5 532.3 868.5 532.3C871.5 532.3 875.0 531.0 877.5 531.5C880.0 532.0 881.5 533.4 883.5 535.3C885.5 537.2 887.5 540.3 889.5 542.8C891.5 545.3 893.5 548.2 895.5 550.3C897.5 552.4 899.5 554.2 901.5 555.5C903.5 556.8 905.8 557.4 907.5 557.8C909.2 558.2 911.2 557.8 912.0 557.8" fill="none" stroke="#7a7a7a" stroke-opacity="0.55" stroke-width="5" filter="url(#b2)" transform="translate(-1,3.5)"/>
<path d="M573.2 508.3C574.7 509.0 577.7 510.4 582.0 512.5C586.3 514.6 592.7 520.2 599.0 521.0C605.3 521.8 614.0 518.5 620.0 517.3C626.0 516.0 630.0 514.9 635.0 513.5C640.0 512.1 645.5 510.8 650.0 509.0C654.5 507.2 659.0 504.6 662.0 503.0C665.0 501.4 667.0 499.9 668.0 499.3" fill="none" stroke="#5a5a5a" stroke-width="7" filter="url(#b2)"/>
<path d="M626 579L640 588L652 611L637 615L632 604Z" fill="#9c9c9c"/>
<path d="M625.5 579L631.5 604L636.5 615L650 616.5" fill="none" stroke="#484848" stroke-width="1.6"/>
<path d="M771 470L781 474L776 482ZM786 473L796 478L790 486ZM760 476L768 471L770 482ZM800 486L808 481L810 492Z" fill="#9c9c9c"/>
<path d="M781 477L784.6 476L786 483L783.4 484.4L781.8 480.6Z" fill="#565656"/><path d="M783 476.5L785.8 482" stroke="#c8c8c8" stroke-width="0.7"/>
<path d="M848 540L851.5 545.5L849.5 549.5L853 552.5M861 538L866 541L872 540M868 548L874 551L880 558L884 555" fill="none" stroke="#5c5c5c" stroke-width="0.8"/>
<path d="M853 543L862 541L860 552ZM870 541L880 544L875 552Z" fill="#c6c6c6"/><path d="M876 552L884 556L879 562Z" fill="#8c8c8c"/>
<path d="M739 592L751.5 617" stroke="#6c6c6c" stroke-width="0.7" opacity="0.8"/>
<path d="M597 520L620 516L650 508L669 498L664 511L645 521L618 531L600 529Z" fill="#868686" filter="url(#b2)"/>
<path d="M599.0 521.0C602.5 520.4 614.0 518.5 620.0 517.3C626.0 516.0 630.0 514.9 635.0 513.5C640.0 512.1 645.5 510.8 650.0 509.0C654.5 507.2 659.0 504.6 662.0 503.0C665.0 501.4 667.0 499.9 668.0 499.3" fill="none" stroke="#333333" stroke-width="1.6" transform="translate(0.3,0.9)"/>
<path d="M573 508L582 512L600 521.5L596 522L585 518L578 514Z" fill="#3c3c3c"/>
<path d="M576 511L598 521" stroke="#8a8a8a" stroke-width="0.8"/>
</g>
<g clip-path="url(#cFace)">
<path d="M668.0 499.3L674.0 494.0L680.0 486.5L686.0 477.5L692.0 468.5L698.0 458.0L704.0 449.0L710.0 441.5L716.0 435.5L722.0 431.0L728.0 428.0L737.0 426.2L746.0 425.8L755.0 425.0L761.0 423.5L770.0 420.5L779.0 418.3L791.0 415.3L798.0 413.0L804.0 410.0L808.5 405.5L813.0 398.8L817.5 395.0L822.8 393.5L828.0 395.0L832.5 398.0L838.5 402.5L846.0 407.0L855.0 411.5L862.5 413.8L870.0 412.7L879.0 412.7L888.0 416.0L897.0 420.5L906.0 424.3L915.0 429.5L924.0 437.0L933.0 444.5L942.0 453.5L949.5 459.5L960.0 465.5L967.5 471.5L973.5 479.0L978.0 488.0L982.5 495.5L987.0 503.5L991.5 512.0L992.3 522.5L989.0 526.0L975.0 533.0L958.0 540.0L940.0 546.0L924.0 550.5L912.0 557.8L907.5 557.8L901.5 555.5L895.5 550.3L889.5 542.8L883.5 535.3L877.5 531.5L868.5 532.3L859.5 531.5L852.0 527.8L844.5 519.5L837.0 510.5L829.5 502.0L822.0 494.0L814.5 485.0L807.0 477.5L800.0 470.8L794.0 468.5L785.0 464.0L776.0 458.8L767.0 455.8L758.0 454.5L749.0 455.0L740.0 457.3L734.0 459.5L728.0 463.3L722.0 468.5L716.0 476.0L710.0 483.5L704.0 488.8L698.0 491.8L689.0 494.8L680.0 497.0L668.0 499.3Z" fill="#a0a0a0"/>
<path d="M582.0 512.5C584.8 513.9 592.7 520.2 599.0 521.0C605.3 521.8 614.0 518.5 620.0 517.3C626.0 516.0 630.0 514.9 635.0 513.5C640.0 512.1 645.5 510.8 650.0 509.0C654.5 507.2 659.0 504.6 662.0 503.0C665.0 501.4 666.0 500.8 668.0 499.3C670.0 497.8 672.0 496.1 674.0 494.0C676.0 491.9 678.0 489.2 680.0 486.5C682.0 483.8 684.0 480.5 686.0 477.5C688.0 474.5 690.0 471.8 692.0 468.5C694.0 465.2 696.0 461.2 698.0 458.0C700.0 454.8 702.0 451.8 704.0 449.0C706.0 446.2 708.0 443.8 710.0 441.5C712.0 439.2 714.0 437.2 716.0 435.5C718.0 433.8 720.0 432.2 722.0 431.0C724.0 429.8 725.5 428.8 728.0 428.0C730.5 427.2 734.0 426.6 737.0 426.2C740.0 425.8 743.0 426.0 746.0 425.8C749.0 425.6 752.5 425.4 755.0 425.0C757.5 424.6 758.5 424.2 761.0 423.5C763.5 422.8 767.0 421.4 770.0 420.5C773.0 419.6 775.5 419.2 779.0 418.3C782.5 417.4 787.8 416.2 791.0 415.3C794.2 414.4 795.8 413.9 798.0 413.0C800.2 412.1 802.2 411.2 804.0 410.0C805.8 408.8 807.0 407.4 808.5 405.5C810.0 403.6 811.5 400.6 813.0 398.8C814.5 397.1 815.9 395.9 817.5 395.0C819.1 394.1 821.0 393.5 822.8 393.5C824.5 393.5 826.4 394.2 828.0 395.0C829.6 395.8 830.8 396.8 832.5 398.0C834.2 399.2 836.2 401.0 838.5 402.5C840.8 404.0 843.2 405.5 846.0 407.0C848.8 408.5 852.2 410.4 855.0 411.5C857.8 412.6 860.0 413.6 862.5 413.8C865.0 414.0 867.2 412.9 870.0 412.7C872.8 412.5 876.0 412.1 879.0 412.7C882.0 413.2 885.0 414.7 888.0 416.0C891.0 417.3 894.0 419.1 897.0 420.5C900.0 421.9 903.0 422.8 906.0 424.3C909.0 425.8 912.0 427.4 915.0 429.5C918.0 431.6 921.0 434.5 924.0 437.0C927.0 439.5 930.0 441.8 933.0 444.5C936.0 447.2 939.2 451.0 942.0 453.5C944.8 456.0 946.5 457.5 949.5 459.5C952.5 461.5 957.0 463.5 960.0 465.5C963.0 467.5 965.2 469.2 967.5 471.5C969.8 473.8 971.8 476.2 973.5 479.0C975.2 481.8 976.5 485.2 978.0 488.0C979.5 490.8 981.0 492.9 982.5 495.5C984.0 498.1 985.5 500.8 987.0 503.5C988.5 506.2 990.6 508.8 991.5 512.0C992.4 515.2 992.5 518.8 992.3 522.5C992.0 526.2 991.1 530.5 990.0 534.5C988.9 538.5 986.2 544.5 985.5 546.5" fill="none" stroke="#5e5e5e" stroke-width="11" filter="url(#b4)"/>

<g filter="url(#b7)">
<path d="M666 503L690 472L706 446L722 430" stroke="#666666" stroke-width="20" fill="none"/>
<ellipse cx="746" cy="441" rx="22" ry="9" fill="#acacac"/>
<ellipse cx="964" cy="488" rx="13" ry="32" transform="rotate(-35 964 488)" fill="#666666"/>
<path d="M926 482L950 500L976 513" stroke="#787878" stroke-width="12" fill="none"/>
<ellipse cx="898" cy="476" rx="14" ry="30" transform="rotate(-40 898 476)" fill="#b8b8b8"/>
<ellipse cx="950" cy="530" rx="22" ry="7" transform="rotate(-15 950 530)" fill="#a8a8a8"/>
<ellipse cx="984" cy="516" rx="6" ry="14" transform="rotate(10 984 516)" fill="#b8b8b8"/>
<ellipse cx="838" cy="492" rx="20" ry="34" transform="rotate(-40 838 492)" fill="#aaaaaa"/>
<ellipse cx="900" cy="543" rx="12" ry="7" fill="#bababa"/>
<ellipse cx="930" cy="440" rx="22" ry="7" transform="rotate(38 930 440)" fill="#949494"/>
<ellipse cx="870" cy="520" rx="14" ry="6" transform="rotate(40 870 520)" fill="#969696"/>
</g>
<g filter="url(#b4)">
<ellipse cx="884" cy="431" rx="12" ry="5" transform="rotate(20 884 431)" fill="#bcbcbc"/>
<ellipse cx="920" cy="432" rx="16" ry="3" transform="rotate(33 920 432)" fill="#c4c4c4"/>
<path d="M700 492L716 478L728 465L742 458" stroke="#848484" stroke-width="4" fill="none"/>
</g>
<g filter="url(#b3)">
<ellipse cx="842.5" cy="421" rx="5" ry="16" transform="rotate(-24 842.5 421)" fill="#6e6e6e"/>
<ellipse cx="858" cy="431" rx="8" ry="6" fill="#b2b2b2"/>
<ellipse cx="864" cy="417" rx="10" ry="3.4" transform="rotate(8 864 417)" fill="#787878"/>
<ellipse cx="783" cy="428" rx="9" ry="6" transform="rotate(-20 783 428)" fill="#c2c2c2"/>
<ellipse cx="801" cy="439" rx="5" ry="10" transform="rotate(-30 801 439)" fill="#bababa"/>
<ellipse cx="880" cy="456" rx="7" ry="10" transform="rotate(-30 880 456)" fill="#808080"/>
<ellipse cx="894" cy="459" rx="3.5" ry="9" transform="rotate(-20 894 459)" fill="#bcbcbc"/>
<ellipse cx="811" cy="424" rx="5" ry="8" transform="rotate(20 811 424)" fill="#8e8e8e"/>
</g>
<g filter="url(#b2)">
<ellipse cx="827" cy="413.5" rx="5.5" ry="16" transform="rotate(-17 827 413.5)" fill="#c4c4c4"/>
<ellipse cx="813.5" cy="408" rx="3.6" ry="12" transform="rotate(30 813.5 408)" fill="#5e5e5e"/>
<path d="M792 430L797 443L796 453" stroke="#666666" stroke-width="3.6" fill="none"/>
<path d="M905 425L935 446L958 464" stroke="#7c7c7c" stroke-width="2.4" fill="none"/>
<path d="M926 470L948 492L972 506" stroke="#626262" stroke-width="3.4" fill="none"/>
<path d="M892 548L906 557L914 558" stroke="#5e5e5e" stroke-width="2.6" fill="none"/>
</g>
<g filter="url(#b1)">
<path d="M868 439.5L874 451L884 468" stroke="#666666" stroke-width="1.8" fill="none"/>
<path d="M869 441L879 446L889 449.5" stroke="#6c6c6c" stroke-width="1.6" fill="none"/>
<path d="M876 450L884 447" stroke="#8a8a8a" stroke-width="1.4" fill="none"/>
</g>
<rect x="660" y="385" width="340" height="200" filter="url(#grain)" opacity="0.07"/>

</g>
<path d="M668.0 499.3C670.0 498.9 676.5 497.8 680.0 497.0C683.5 496.2 686.0 495.7 689.0 494.8C692.0 493.9 695.5 492.8 698.0 491.8C700.5 490.8 702.0 490.2 704.0 488.8C706.0 487.4 708.0 485.6 710.0 483.5C712.0 481.4 714.0 478.5 716.0 476.0C718.0 473.5 720.0 470.6 722.0 468.5C724.0 466.4 726.0 464.8 728.0 463.3C730.0 461.8 732.0 460.5 734.0 459.5C736.0 458.5 737.5 458.1 740.0 457.3C742.5 456.6 746.0 455.5 749.0 455.0C752.0 454.5 755.0 454.4 758.0 454.5C761.0 454.6 764.0 455.1 767.0 455.8C770.0 456.5 773.0 457.4 776.0 458.8C779.0 460.2 782.0 462.4 785.0 464.0C788.0 465.6 791.5 467.4 794.0 468.5C796.5 469.6 797.8 469.3 800.0 470.8C802.2 472.3 804.6 475.1 807.0 477.5C809.4 479.9 812.0 482.2 814.5 485.0C817.0 487.8 819.5 491.2 822.0 494.0C824.5 496.8 827.0 499.2 829.5 502.0C832.0 504.8 834.5 507.6 837.0 510.5C839.5 513.4 842.0 516.6 844.5 519.5C847.0 522.4 849.5 525.8 852.0 527.8C854.5 529.8 856.8 530.8 859.5 531.5C862.2 532.2 865.5 532.3 868.5 532.3C871.5 532.3 875.0 531.0 877.5 531.5C880.0 532.0 881.5 533.4 883.5 535.3C885.5 537.2 887.5 540.3 889.5 542.8C891.5 545.3 893.5 548.2 895.5 550.3C897.5 552.4 899.5 554.2 901.5 555.5C903.5 556.8 905.8 557.4 907.5 557.8C909.2 558.2 911.2 557.8 912.0 557.8" fill="none" stroke="#1c1c1c" stroke-width="1.3"/>
<g fill="none" stroke-width="1.2">
<path d="M822.3 238.9C818.6 238.9 806.9 238.3 800.0 238.9C793.1 239.5 788.6 240.5 780.8 242.5C772.9 244.5 762.2 247.7 752.9 250.9C743.6 254.2 734.3 257.6 725.0 262.0C715.7 266.4 706.5 271.6 697.2 277.4C687.9 283.2 678.6 289.5 669.3 296.9C660.0 304.3 650.8 312.7 641.5 322.0C632.2 331.3 622.0 342.4 613.6 352.6C605.2 362.8 597.8 373.0 591.3 383.2C584.8 393.4 579.7 403.2 574.6 413.9C569.5 424.6 564.3 437.1 560.6 447.3C556.9 457.5 554.4 466.4 552.3 475.2C550.2 484.0 549.0 492.9 548.1 500.0C547.2 507.1 546.7 513.4 546.6 518.0C546.5 522.6 546.6 521.6 547.3 527.9C548.0 534.2 549.1 546.4 550.9 555.7C552.7 565.0 554.9 574.3 557.9 583.6C560.9 592.9 564.4 602.2 569.0 611.5C573.6 620.8 579.7 630.9 585.7 639.3C591.7 647.6 598.2 654.6 605.2 661.6C612.2 668.6 619.6 675.3 627.5 681.1C635.4 686.9 643.8 692.2 652.6 696.4C661.4 700.6 671.2 703.9 680.5 706.2C689.8 708.5 699.0 709.7 708.3 710.4C717.6 711.1 726.9 711.0 736.2 710.4C745.5 709.8 755.8 708.1 764.1 706.7C772.5 705.3 780.3 703.3 786.3 702.0C792.3 700.7 797.7 699.2 800.0 698.7" stroke="url(#gGreen)"/>
<path d="M822.3 238.9C823.2 238.9 824.6 238.6 827.9 238.9C831.1 239.2 837.2 239.3 841.8 240.6C846.4 241.9 851.1 244.0 855.7 246.7C860.4 249.3 865.1 252.8 869.7 256.5C874.4 260.2 879.0 264.4 883.6 269.0C888.2 273.6 892.9 278.7 897.5 284.3C902.1 289.9 906.9 295.7 911.5 302.4C916.1 309.1 920.8 316.3 925.4 324.7C930.0 333.1 935.1 343.3 939.3 352.6C943.5 361.9 947.2 371.2 950.5 380.5C953.8 389.8 956.5 399.9 958.8 408.3C961.1 416.7 962.8 423.2 964.4 430.6C966.0 438.0 967.4 445.5 968.6 452.9C969.8 460.3 970.7 467.3 971.4 475.2C972.1 483.1 972.5 491.2 972.8 500.0C973.1 508.8 973.4 518.6 973.3 527.9C973.2 537.2 972.8 546.4 972.2 555.7C971.7 565.0 970.9 574.3 970.0 583.6C969.1 592.9 968.0 602.2 966.6 611.5C965.2 620.8 963.6 630.0 961.6 639.3C959.6 648.6 957.4 657.9 954.6 667.2C951.8 676.5 948.8 686.2 944.9 695.0C941.0 703.8 935.6 713.1 931.0 720.1C926.4 727.1 922.1 731.9 917.0 736.8C911.9 741.7 905.9 746.2 900.3 749.4C894.7 752.6 889.2 754.3 883.6 755.8C878.0 757.3 872.5 758.4 866.9 758.6C861.3 758.8 853.0 757.2 850.2 756.9" stroke="url(#gPink)"/>
<path d="M541.0 500.0C541.2 502.8 541.1 511.1 542.5 516.7C543.9 522.3 546.0 527.8 549.5 533.4C553.0 539.0 557.4 544.2 563.4 550.2C569.4 556.2 577.3 563.4 585.7 569.7C594.1 576.0 604.3 582.5 613.6 587.8C622.9 593.1 632.2 597.5 641.5 601.7C650.8 605.9 660.0 609.5 669.3 612.8C678.6 616.0 687.9 618.6 697.2 621.2C706.5 623.8 715.7 626.2 725.0 628.2C734.3 630.2 743.6 631.8 752.9 633.2C762.2 634.6 772.9 635.7 780.8 636.5C788.6 637.3 794.5 637.5 800.0 638.0C805.5 638.5 806.9 638.7 813.9 639.3C820.9 639.9 832.5 640.9 841.8 641.5C851.1 642.1 860.4 642.6 869.7 642.7C879.0 642.8 888.2 642.6 897.5 642.1C906.8 641.6 916.1 640.9 925.4 639.9C934.7 638.9 943.9 637.7 953.2 636.0C962.5 634.3 971.8 632.3 981.1 629.6C990.4 626.9 1000.6 623.5 1009.0 619.8C1017.4 616.1 1024.8 611.9 1031.3 607.3C1037.8 602.7 1043.4 597.4 1048.0 592.0C1052.6 586.6 1056.7 580.8 1059.1 575.2C1061.5 569.6 1061.9 561.3 1062.5 558.5" stroke="url(#gHor)"/>
</g>
</svg>
<!--/SCENE-->
<div id="infobar" class="abs"></div>
<div class="it" style="left:168px;top:894px;"><span style="letter-spacing:-0.35px">FOV: 60</span>
FPS:   13.7</div>
<div class="it" style="left:806px;top:894px;">Current Mesh: Poisson mesh
Vertices: 190209 (406745)
Faces: 380412 (811196)</div>
<div id="statusbar" class="abs"></div>
<div id="progress" class="abs"></div>
<div id="titlebar" class="abs"></div>
<div id="title" class="abs">MeshLab_64bit v1.3.3 - [Project_1]</div>
<div id="menubar" class="abs"></div>
<div class="mi" style="left:29px"><u>F</u>ile</div>
<div class="mi" style="left:57px"><u>E</u>dit</div>
<div class="mi" style="left:87px">Fi<u>l</u>ters</div>
<div class="mi" style="left:126px"><u>R</u>ender</div>
<div class="mi" style="left:170px"><u>V</u>iew</div>
<div class="mi" style="left:204px"><u>W</u>indows</div>
<div class="mi" style="left:258px"><u>T</u>ools</div>
<div class="mi" style="left:293px"><u>H</u>elp</div>
<div id="toolbar" class="abs"></div>
<!--TB-->
<svg class="abs" id="tb" style="left:0;top:36px" width="1600" height="30" viewBox="0 36 1600 30">
<defs>
<linearGradient id="gFold" x1="0" y1="0" x2="1" y2="1"><stop offset="0" stop-color="#f4f400"/><stop offset="1" stop-color="#a8a800"/></linearGradient>
<linearGradient id="gCyl" x1="0" y1="0" x2="1" y2="0"><stop offset="0" stop-color="#8fc0f0"/><stop offset="0.38" stop-color="#ffffff"/><stop offset="1" stop-color="#8abcf0"/></linearGradient>
<linearGradient id="gNavy" x1="0" y1="0" x2="0" y2="1"><stop offset="0" stop-color="#14143c"/><stop offset="1" stop-color="#55558e"/></linearGradient>
<radialGradient id="gBulb" cx="0.55" cy="0.4" r="0.6"><stop offset="0" stop-color="#ffffd0"/><stop offset="0.35" stop-color="#ffff30"/><stop offset="1" stop-color="#e4e400"/></radialGradient>
<linearGradient id="gLens" x1="0" y1="0" x2="0" y2="1"><stop offset="0" stop-color="#b8f0ea"/><stop offset="0.35" stop-color="#30b0a8"/><stop offset="1" stop-color="#087870"/></linearGradient>
<linearGradient id="gRain" x1="0" y1="0" x2="1" y2="0"><stop offset="0" stop-color="#101090"/><stop offset="0.2" stop-color="#a010c0"/><stop offset="0.38" stop-color="#f01030"/><stop offset="0.52" stop-color="#f08010"/><stop offset="0.64" stop-color="#f0f000"/><stop offset="0.82" stop-color="#20d020"/><stop offset="1" stop-color="#10d0d0"/></linearGradient>
<linearGradient id="gBunny" gradientUnits="userSpaceOnUse" x1="0" y1="40.8" x2="0" y2="57.7"><stop offset="0" stop-color="#20e8e8"/><stop offset="0.12" stop-color="#18c018"/><stop offset="0.24" stop-color="#40d010"/><stop offset="0.36" stop-color="#f0f020"/><stop offset="0.5" stop-color="#f87020"/><stop offset="0.6" stop-color="#f03040"/><stop offset="0.75" stop-color="#ff58f0"/><stop offset="0.9" stop-color="#e050f8"/><stop offset="1" stop-color="#9030b8"/></linearGradient>
</defs>
<path d="M12.7 41.3l1.3 -0.9" stroke="#9c9c9c" stroke-width="1.1"/>
<path d="M12.7 44.5l1.3 -0.9" stroke="#9c9c9c" stroke-width="1.1"/>
<path d="M12.7 47.7l1.3 -0.9" stroke="#9c9c9c" stroke-width="1.1"/>
<path d="M12.7 50.9l1.3 -0.9" stroke="#9c9c9c" stroke-width="1.1"/>
<path d="M12.7 54.1l1.3 -0.9" stroke="#9c9c9c" stroke-width="1.1"/>
<path d="M12.7 57.3l1.3 -0.9" stroke="#9c9c9c" stroke-width="1.1"/>
<path d="M12.7 60.5l1.3 -0.9" stroke="#9c9c9c" stroke-width="1.1"/>
<path d="M23.5 42.5H32L36.5 47V58.2H23.5Z" fill="#fff" stroke="#9e9e9e" stroke-width="0.9"/>
<path d="M32 42.5V47H36.5Z" fill="#e4e4e4" stroke="#9e9e9e" stroke-width="0.8"/>
<g transform="translate(0.0 0)">
<path d="M47.6 45.2H51.6L52.6 46.6H58.4V52L50 57.4H47.6Z" fill="#c4c400" stroke="#4a4a00" stroke-width="0.7"/>
<path d="M47.6 46V57.4" stroke="#2a2a00" stroke-width="1.1"/>
<path d="M51.7 49.6L62.8 49.6L59.6 57.7H48Z" fill="url(#gFold)" stroke="#5a5a00" stroke-width="0.7"/>
</g>
<g><ellipse cx="59.4" cy="43.2" rx="4.8" ry="1.7" fill="#d8d8d8" stroke="#8a8a8a" stroke-width="0.6"/>
<path d="M54.6 43.2V47.4A4.8 1.7 0 0 0 64.2 47.4V43.2A4.8 1.7 0 0 1 54.6 43.2Z" fill="#a8a8a8" stroke="#7c7c7c" stroke-width="0.6"/>
<path d="M54.6 45.3A4.8 1.7 0 0 0 64.2 45.3" fill="none" stroke="#e8e8e8" stroke-width="0.7"/></g>
<g transform="translate(26.0 0)">
<path d="M47.6 45.2H51.6L52.6 46.6H58.4V52L50 57.4H47.6Z" fill="#c4c400" stroke="#4a4a00" stroke-width="0.7"/>
<path d="M47.6 46V57.4" stroke="#2a2a00" stroke-width="1.1"/>
<path d="M51.7 49.6L62.8 49.6L59.6 57.7H48Z" fill="url(#gFold)" stroke="#5a5a00" stroke-width="0.7"/>
</g>
<path d="M83.4 42.2Q87.2 43.4 88.4 46.6" fill="none" stroke="#111" stroke-width="1"/><path d="M89.3 44.8L88.7 47.8L86.6 46Z" fill="#111"/>
<path d="M105 43.3Q109.6 43.4 111.6 48.4L109.8 49.2Q108.4 45.4 104.9 44.7Z" fill="#1c3ccc"/>
<path d="M109.2 49.7L113.7 48L113.3 52.8Z" fill="#bcd2fa" stroke="#7888a8" stroke-width="0.5"/>
<path d="M108.6 57.6Q104 57.4 102.2 52.4L104 51.6Q105.4 55.6 108.8 56.2Z" fill="#1c3ccc"/>
<path d="M104.7 51.4L100.1 48.4L100.4 53.3Z" fill="#bcd2fa" stroke="#7888a8" stroke-width="0.5"/>
<path d="M132.2 44.6L141.6 48.8L132.5 58.9L124 50.5Z" fill="#8cc0f8"/>
<path d="M130.5 48.3L133.7 45.8L139.3 48.4L135.9 51.9Z" fill="#fcfcfc" stroke="#90a0b4" stroke-width="0.35"/>
<path d="M126.5 53.0L130.1 50.0L134.5 53.3L130.8 57.2Z" fill="#262626"/>
<circle cx="130.6" cy="53.3" r="1.1" fill="#9c9c9c"/>
<path d="M124 50.5L132.2 44.6L141.6 48.8" fill="none" stroke="#2c5490" stroke-width="0.7"/>
<path d="M141.6 48.8L132.5 58.9L124 50.5" fill="none" stroke="#14141e" stroke-width="1.3" stroke-linejoin="round"/>
<rect x="150.4" y="44.8" width="15.6" height="11.8" rx="1.6" fill="#b4b4b4" stroke="#7c7c7c" stroke-width="0.8"/>
<rect x="151" y="46" width="2.7" height="9.6" fill="#eeeeee"/>
<rect x="163.4" y="47.2" width="2" height="8" fill="#dedede"/>
<rect x="154" y="44.6" width="7.6" height="1.3" fill="#8c8c8c"/>
<rect x="163" y="45.7" width="2.4" height="1.2" fill="#58bcc4"/>
<circle cx="159.3" cy="51.4" r="5.1" fill="#9a9a9a"/><circle cx="159.3" cy="51.4" r="4.4" fill="#4c4848"/><circle cx="159.3" cy="51.4" r="3.2" fill="url(#gLens)"/>
<path d="M175.8 44.6L183 42.9L190.2 44.6L183 46.3Z" fill="#b4b4b4" stroke="#888" stroke-width="0.55"/>
<path d="M175.8 46.5L183 44.8L190.2 46.5L183 48.2Z" fill="#b4b4b4" stroke="#888" stroke-width="0.55"/>
<path d="M175.8 48.3L183 46.6L190.2 48.3L183 50.0Z" fill="#b4b4b4" stroke="#888" stroke-width="0.55"/>
<path d="M175.8 50.2L183 48.5L190.2 50.2L183 51.9Z" fill="#b4b4b4" stroke="#888" stroke-width="0.55"/>
<path d="M175.8 52.0L183 50.3L190.2 52.0L183 53.7Z" fill="#b4b4b4" stroke="#888" stroke-width="0.55"/>
<path d="M175.8 53.9L183 52.1L190.2 53.9L183 55.6Z" fill="#b4b4b4" stroke="#888" stroke-width="0.55"/>
<path d="M175.8 55.7L183 54.0L190.2 55.7L183 57.4Z" fill="#b4b4b4" stroke="#888" stroke-width="0.55"/>
<path d="M175.8 57.6L183 55.9L190.2 57.6L183 59.3Z" fill="#b4b4b4" stroke="#888" stroke-width="0.55"/>
<g fill="none" stroke="#b4b4b4" stroke-width="0.9"><circle cx="209.8" cy="50.4" r="7.6" fill="#f4f4f4"/><path d="M202.2 50.4H217.4M209.8 42.8V58"/><ellipse cx="209.8" cy="50.4" rx="3.4" ry="7.6"/></g>
<path d="M203 51.5Q207 48 210 50.5T216.8 50.8V53.5H203Z" fill="#bdbdbd"/><path d="M203 54.6H216.6" stroke="#bcbcbc" stroke-width="1.2"/>
<path d="M224.6 37V64" stroke="#b4b4b4" stroke-width="1"/><path d="M225.6 37V64" stroke="#ffffff" stroke-width="1"/>
<path d="M228.6 41.3l1.3 -0.9" stroke="#9c9c9c" stroke-width="1.1"/>
<path d="M228.6 44.5l1.3 -0.9" stroke="#9c9c9c" stroke-width="1.1"/>
<path d="M228.6 47.7l1.3 -0.9" stroke="#9c9c9c" stroke-width="1.1"/>
<path d="M228.6 50.9l1.3 -0.9" stroke="#9c9c9c" stroke-width="1.1"/>
<path d="M228.6 54.1l1.3 -0.9" stroke="#9c9c9c" stroke-width="1.1"/>
<path d="M228.6 57.3l1.3 -0.9" stroke="#9c9c9c" stroke-width="1.1"/>
<path d="M228.6 60.5l1.3 -0.9" stroke="#9c9c9c" stroke-width="1.1"/>
<g fill="none" stroke="#6a6a6a" stroke-width="0.9"><rect x="236.2" y="46.8" width="14.2" height="12.8"/><path d="M236.2 46.8L241 41.6H254.8V54.6L250.4 59.6M250.4 46.8L254.8 41.6"/><path d="M241 41.6V54.6H254.8M241 54.6L236.2 59.6" stroke="#a8a8a8"/><rect x="240.6" y="49.2" width="9" height="8" stroke="#c4c4c4"/></g>
<rect x="264.9" y="41.8" width="1.5" height="1.5" fill="#222"/>
<rect x="272.1" y="41.0" width="1.5" height="1.5" fill="#222"/>
<rect x="277.6" y="42.1" width="1.5" height="1.5" fill="#222"/>
<rect x="262.9" y="43.5" width="1.5" height="1.5" fill="#222"/>
<rect x="275.6" y="44.0" width="1.5" height="1.5" fill="#222"/>
<rect x="268.2" y="44.5" width="1.5" height="1.5" fill="#222"/>
<rect x="264.9" y="55.5" width="1.5" height="1.5" fill="#222"/>
<rect x="272.1" y="55.1" width="1.5" height="1.5" fill="#222"/>
<rect x="277.6" y="56.2" width="1.5" height="1.5" fill="#222"/>
<rect x="262.9" y="57.4" width="1.5" height="1.5" fill="#222"/>
<rect x="275.6" y="58.0" width="1.5" height="1.5" fill="#222"/>
<rect x="268.2" y="58.6" width="1.5" height="1.5" fill="#222"/>
<path d="M289.4 44.9L292.2 42.5L297.6 41.5L302.4 42.5L304.5 44.9V56.6L302 58.8L296.8 59.7L291.6 58.8L289.6 57.3Z" fill="#f4f4f4" stroke="#3a3a3a" stroke-width="0.9"/>
<g fill="none" stroke="#333" stroke-width="0.75"><path d="M289.4 44.9L292.6 46.4L297.4 47L302 46.2L304.5 44.9M292.6 46.4L291.6 58.8M297.4 47L296.8 59.7M302 46.2V58.8M289.4 44.9L291.6 58.8M292.6 46.4L296.8 59.7M297.4 47L291.6 58.8M297.4 47L302 58.8M302 46.2L296.8 59.7M304.5 44.9L302 58.8M292.2 42.5L296.8 59.7M302.4 42.5L292 58.8M297.6 41.5V47"/></g>
<path d="M315.2 44.6L321 46L321 59.4L315.6 57.3Z" fill="#e2effb"/>
<path d="M321 46L327.9 45.6V59L321 59.4Z" fill="#88bcf2"/>
<path d="M327.9 45.6L330.6 44.3V57L327.9 59Z" fill="#2c64a8"/>
<path d="M315.2 44.6L318.3 42.2L323.8 41.4L328.6 42.2L330.6 44.3L327.9 45.6L321 46Z" fill="#cfe3f8"/>
<g fill="none" stroke="#2a2a2a" stroke-width="0.8"><path d="M315.2 44.6L318.3 42.2L323.8 41.4L328.6 42.2L330.6 44.3V57L327.9 59L321 59.4L315.6 57.3ZM315.2 44.6L321 46L327.9 45.6L330.6 44.3M321 46V59.4M327.9 45.6V59M321 46L316.6 57.8M327.9 45.6L321 59.4M318 45.3V58.3"/></g>
<rect x="336.5" y="38.5" width="25" height="24" fill="#b7d7f5" stroke="#68a6e6" stroke-width="1"/>
<path d="M342.2 46L346.4 42.6H353.6L356.6 45.2V57.6L353 59.6H347.4L342.2 57.6Z" fill="#dfeaf8"/>
<path d="M342.2 46L346.4 42.6H353.6L356.6 45.2L353 47H347.4Z" fill="#cfe2f8"/>
<path d="M347.4 47H353V59.6H347.4Z" fill="#92c2f2"/><path d="M353 47L356.6 45.2V57.6L353 59.6Z" fill="#6ea8e2"/>
<path d="M366.8 44.4A7.2 2.4 0 0 1 381.2 44.4V57A7.2 2.4 0 0 1 366.8 57Z" fill="url(#gCyl)"/><ellipse cx="374" cy="44.4" rx="7.2" ry="2.4" fill="#cfe4f8"/>
<g opacity="0.75"><path d="M392.4 44.4A7.2 2.4 0 0 1 406.8 44.4V57A7.2 2.4 0 0 1 392.4 57Z" fill="#dce9f7"/>
<circle cx="405.0" cy="57.2" r="0.6" fill="#a8caee"/>
<circle cx="397.5" cy="46.0" r="1.2" fill="#ffffff"/>
<circle cx="396.1" cy="46.6" r="0.6" fill="#8fb8e8"/>
<circle cx="405.5" cy="52.8" r="1.2" fill="#ffffff"/>
<circle cx="399.8" cy="50.0" r="0.8" fill="#a8caee"/>
<circle cx="403.9" cy="48.8" r="1.3" fill="#b8d4f2"/>
<circle cx="398.3" cy="56.3" r="0.7" fill="#8fb8e8"/>
<circle cx="396.0" cy="43.8" r="0.8" fill="#8fb8e8"/>
<circle cx="399.4" cy="48.7" r="1.0" fill="#8fb8e8"/>
<circle cx="405.4" cy="50.0" r="0.9" fill="#ffffff"/>
<circle cx="402.9" cy="48.6" r="1.3" fill="#b8d4f2"/>
<circle cx="395.0" cy="54.4" r="1.1" fill="#b8d4f2"/>
<circle cx="401.2" cy="47.1" r="0.8" fill="#b8d4f2"/>
<circle cx="399.3" cy="55.6" r="0.8" fill="#b8d4f2"/>
<circle cx="404.2" cy="50.2" r="1.0" fill="#b8d4f2"/>
<circle cx="399.1" cy="46.7" r="0.8" fill="#8fb8e8"/>
<circle cx="404.0" cy="52.4" r="1.1" fill="#b8d4f2"/>
<circle cx="396.9" cy="57.4" r="1.1" fill="#b8d4f2"/>
<circle cx="396.9" cy="46.5" r="1.0" fill="#a8caee"/>
<circle cx="402.8" cy="48.5" r="0.6" fill="#8fb8e8"/>
<circle cx="405.5" cy="45.0" r="1.0" fill="#a8caee"/>
<circle cx="396.4" cy="46.8" r="1.2" fill="#a8caee"/>
<circle cx="402.4" cy="45.5" r="0.8" fill="#8fb8e8"/>
<circle cx="404.8" cy="44.4" r="1.2" fill="#a8caee"/>
<circle cx="393.7" cy="48.7" r="0.8" fill="#a8caee"/>
<circle cx="394.0" cy="57.3" r="0.6" fill="#a8caee"/>
<path d="M405 45V58.4" stroke="#c0c8d0" stroke-width="1.2"/></g>
<rect x="413.5" y="38.5" width="25" height="24" fill="#b7d7f5" stroke="#68a6e6" stroke-width="1"/>
<path d="M423.2 53H429.4V57.6L427.6 59.8H425L423.2 57.6Z" fill="#222"/><rect x="424.6" y="55" width="3.4" height="2.6" fill="#bdbdbd"/><path d="M426.3 55V57.6M424.6 56.3H428" stroke="#666" stroke-width="0.4"/>
<circle cx="426.3" cy="48.8" r="5.7" fill="url(#gBulb)" stroke="#7a7a20" stroke-width="0.5"/>
<path d="M443.6 43.6L447.4 41H456.4L459.6 43.2V57.4L456.4 59.8H448L443.6 57.8Z" fill="#f8f8f8" stroke="#9a9a9a" stroke-width="0.8"/>
<path d="M447.8 41.6L454.4 40.9L456.8 44.2L449.8 59.7L443.9 58Z" fill="#ee5c62"/><path d="M456.4 59.8V45M448 59.8L456.4 45" stroke="#9a9a9a" stroke-width="0.6" fill="none"/>
<g fill="none" stroke="#8c8c8c" stroke-width="0.8"><path d="M469.6 43.8L472.8 41.6H482.4L485 43.8V57.6L482 59.6H473L469.6 58.2Z" fill="#f6f6f6"/><path d="M475.2 45V59.4M469.6 58.2L475.2 45M475.2 59.4L482.4 45M482.4 45V59.4M469.6 43.8L475.2 45H485" stroke="#555"/></g>
<circle cx="471.8" cy="41.8" r="1.25" fill="#d82028" stroke="#801018" stroke-width="0.4"/>
<circle cx="469.7" cy="43.6" r="1.25" fill="#d82028" stroke="#801018" stroke-width="0.4"/>
<circle cx="475.2" cy="44.9" r="1.25" fill="#d82028" stroke="#801018" stroke-width="0.4"/>
<circle cx="482.4" cy="44.9" r="1.25" fill="#d82028" stroke="#801018" stroke-width="0.4"/>
<circle cx="469.5" cy="58.3" r="1.25" fill="#d82028" stroke="#801018" stroke-width="0.4"/>
<path d="M491.0 37V64" stroke="#b4b4b4" stroke-width="1"/><path d="M492.0 37V64" stroke="#ffffff" stroke-width="1"/>
<path d="M495.8 41.3l1.3 -0.9" stroke="#9c9c9c" stroke-width="1.1"/>
<path d="M495.8 44.5l1.3 -0.9" stroke="#9c9c9c" stroke-width="1.1"/>
<path d="M495.8 47.7l1.3 -0.9" stroke="#9c9c9c" stroke-width="1.1"/>
<path d="M495.8 50.9l1.3 -0.9" stroke="#9c9c9c" stroke-width="1.1"/>
<path d="M495.8 54.1l1.3 -0.9" stroke="#9c9c9c" stroke-width="1.1"/>
<path d="M495.8 57.3l1.3 -0.9" stroke="#9c9c9c" stroke-width="1.1"/>
<path d="M495.8 60.5l1.3 -0.9" stroke="#9c9c9c" stroke-width="1.1"/>
<g fill="none" stroke="#b0b0b0" stroke-width="0.9"><circle cx="512.7" cy="50.1" r="7.6"/><ellipse cx="512.7" cy="50.1" rx="3" ry="7.6"/><ellipse cx="512.7" cy="50.1" rx="7.6" ry="2.6"/><path d="M512.7 42.5V57.7"/></g>
<circle cx="538.5" cy="50.15" r="9.15" fill="#ffff00" stroke="#1c1c34" stroke-width="1.3"/>
<g opacity="0.99"><text x="538.4" y="56" font-family="Liberation Serif,serif" font-size="16" text-anchor="middle" fill="#000">A</text></g>
<rect x="553.7" y="39.9" width="21.1" height="20.9" fill="#fcfcfc"/><rect x="554.5" y="40.7" width="19.5" height="19.3" fill="url(#gNavy)"/><rect x="554.5" y="40.7" width="19.5" height="1" fill="#06061a"/>
<path d="M560 48.2L564.4 45L568.8 48.2V54.4H560Z" fill="#8e8a78"/><path d="M561.6 48.6V54.2M564.4 48.6V54.2M567.2 48.6V54.2" stroke="#565244" stroke-width="0.9"/>
<path d="M582 44Q583 41.6 590 41.8T598.6 44.6Q599.6 50 598.4 55.4Q597 59.2 592 58.2L590 59L587 58.6Q582.4 58 581.4 53Q580.8 48 582 44Z" fill="#3c3c3c"/>
<clipPath id="cMesh"><path d="M582 44Q583 41.6 590 41.8T598.6 44.6Q599.6 50 598.4 55.4Q597 59.2 592 58.2L590 59L587 58.6Q582.4 58 581.4 53Q580.8 48 582 44Z"/></clipPath><g clip-path="url(#cMesh)">
<rect x="592.2" y="54.5" width="1.15" height="1.15" fill="#f4f4f4"/>
<rect x="596.1" y="55.1" width="1.15" height="1.15" fill="#e0e0e0"/>
<rect x="592.7" y="57.3" width="1.15" height="1.15" fill="#f4f4f4"/>
<rect x="587.7" y="56.7" width="1.15" height="1.15" fill="#c8c8c8"/>
<rect x="590.8" y="51.6" width="1.15" height="1.15" fill="#f4f4f4"/>
<rect x="594.2" y="48.7" width="1.15" height="1.15" fill="#e0e0e0"/>
<rect x="597.5" y="54.9" width="1.15" height="1.15" fill="#e0e0e0"/>
<rect x="594.7" y="42.9" width="1.15" height="1.15" fill="#c8c8c8"/>
<rect x="583.3" y="41.6" width="1.15" height="1.15" fill="#f4f4f4"/>
<rect x="584.8" y="45.3" width="1.15" height="1.15" fill="#e0e0e0"/>
<rect x="596.7" y="46.6" width="1.15" height="1.15" fill="#e0e0e0"/>
<rect x="590.7" y="53.4" width="1.15" height="1.15" fill="#e0e0e0"/>
<rect x="584.3" y="58.5" width="1.15" height="1.15" fill="#e0e0e0"/>
<rect x="598.4" y="57.2" width="1.15" height="1.15" fill="#ffffff"/>
<rect x="581.4" y="48.8" width="1.15" height="1.15" fill="#e0e0e0"/>
<rect x="585.7" y="47.4" width="1.15" height="1.15" fill="#f4f4f4"/>
<rect x="591.7" y="53.9" width="1.15" height="1.15" fill="#f4f4f4"/>
<rect x="586.6" y="55.8" width="1.15" height="1.15" fill="#c8c8c8"/>
<rect x="593.5" y="44.8" width="1.15" height="1.15" fill="#c8c8c8"/>
<rect x="593.7" y="42.6" width="1.15" height="1.15" fill="#f4f4f4"/>
<rect x="598.1" y="47.8" width="1.15" height="1.15" fill="#c8c8c8"/>
<rect x="581.3" y="55.3" width="1.15" height="1.15" fill="#ffffff"/>
<rect x="587.8" y="56.2" width="1.15" height="1.15" fill="#c8c8c8"/>
<rect x="581.8" y="44.7" width="1.15" height="1.15" fill="#e0e0e0"/>
<rect x="583.1" y="45.9" width="1.15" height="1.15" fill="#c8c8c8"/>
<rect x="587.2" y="47.8" width="1.15" height="1.15" fill="#ffffff"/>
<rect x="595.0" y="43.5" width="1.15" height="1.15" fill="#ffffff"/>
<rect x="596.5" y="42.2" width="1.15" height="1.15" fill="#f4f4f4"/>
<rect x="584.8" y="50.5" width="1.15" height="1.15" fill="#ffffff"/>
<rect x="597.5" y="47.5" width="1.15" height="1.15" fill="#f4f4f4"/>
<rect x="586.6" y="47.1" width="1.15" height="1.15" fill="#e0e0e0"/>
<rect x="595.4" y="52.5" width="1.15" height="1.15" fill="#ffffff"/>
<rect x="598.9" y="44.4" width="1.15" height="1.15" fill="#f4f4f4"/>
<rect x="582.5" y="52.1" width="1.15" height="1.15" fill="#c8c8c8"/>
<rect x="581.6" y="54.5" width="1.15" height="1.15" fill="#ffffff"/>
<rect x="595.9" y="49.5" width="1.15" height="1.15" fill="#c8c8c8"/>
<rect x="583.6" y="58.6" width="1.15" height="1.15" fill="#f4f4f4"/>
<rect x="595.4" y="47.4" width="1.15" height="1.15" fill="#e0e0e0"/>
<rect x="583.4" y="54.3" width="1.15" height="1.15" fill="#e0e0e0"/>
<rect x="592.3" y="55.3" width="1.15" height="1.15" fill="#f4f4f4"/>
<rect x="584.0" y="48.1" width="1.15" height="1.15" fill="#f4f4f4"/>
<rect x="596.2" y="46.7" width="1.15" height="1.15" fill="#c8c8c8"/>
<rect x="597.6" y="52.4" width="1.15" height="1.15" fill="#e0e0e0"/>
<rect x="598.6" y="49.5" width="1.15" height="1.15" fill="#c8c8c8"/>
<rect x="593.4" y="47.1" width="1.15" height="1.15" fill="#ffffff"/>
<rect x="586.2" y="48.6" width="1.15" height="1.15" fill="#e0e0e0"/>
<rect x="583.0" y="55.9" width="1.15" height="1.15" fill="#e0e0e0"/>
<rect x="592.3" y="50.3" width="1.15" height="1.15" fill="#ffffff"/>
<rect x="584.2" y="50.2" width="1.15" height="1.15" fill="#ffffff"/>
<rect x="582.1" y="55.4" width="1.15" height="1.15" fill="#ffffff"/>
<rect x="593.5" y="53.2" width="1.15" height="1.15" fill="#ffffff"/>
<rect x="587.5" y="53.9" width="1.15" height="1.15" fill="#ffffff"/>
<rect x="596.0" y="46.2" width="1.15" height="1.15" fill="#ffffff"/>
<rect x="598.2" y="47.5" width="1.15" height="1.15" fill="#e0e0e0"/>
<rect x="591.5" y="41.8" width="1.15" height="1.15" fill="#ffffff"/>
<rect x="586.9" y="46.4" width="1.15" height="1.15" fill="#ffffff"/>
<rect x="595.7" y="52.9" width="1.15" height="1.15" fill="#ffffff"/>
<rect x="587.3" y="52.8" width="1.15" height="1.15" fill="#c8c8c8"/>
<rect x="587.3" y="56.3" width="1.15" height="1.15" fill="#c8c8c8"/>
<rect x="598.6" y="58.2" width="1.15" height="1.15" fill="#e0e0e0"/>
<rect x="590.5" y="44.5" width="1.15" height="1.15" fill="#ffffff"/>
<rect x="597.9" y="49.9" width="1.15" height="1.15" fill="#f4f4f4"/>
<rect x="594.0" y="54.3" width="1.15" height="1.15" fill="#e0e0e0"/>
<rect x="592.1" y="57.9" width="1.15" height="1.15" fill="#c8c8c8"/>
<rect x="586.4" y="51.2" width="1.15" height="1.15" fill="#ffffff"/>
<rect x="594.0" y="42.1" width="1.15" height="1.15" fill="#e0e0e0"/>
<rect x="591.6" y="52.5" width="1.15" height="1.15" fill="#e0e0e0"/>
<rect x="584.9" y="53.5" width="1.15" height="1.15" fill="#f4f4f4"/>
<rect x="598.8" y="58.6" width="1.15" height="1.15" fill="#e0e0e0"/>
<rect x="582.0" y="43.9" width="1.15" height="1.15" fill="#ffffff"/>
<rect x="598.4" y="50.0" width="1.15" height="1.15" fill="#f4f4f4"/>
<rect x="588.5" y="47.7" width="1.15" height="1.15" fill="#f4f4f4"/>
<rect x="591.6" y="45.7" width="1.15" height="1.15" fill="#ffffff"/>
<rect x="581.0" y="48.7" width="1.15" height="1.15" fill="#ffffff"/>
<rect x="596.4" y="56.7" width="1.15" height="1.15" fill="#ffffff"/>
<rect x="598.4" y="51.2" width="1.15" height="1.15" fill="#ffffff"/>
<rect x="582.7" y="51.1" width="1.15" height="1.15" fill="#ffffff"/>
<rect x="598.1" y="46.7" width="1.15" height="1.15" fill="#ffffff"/>
<rect x="595.7" y="48.9" width="1.15" height="1.15" fill="#ffffff"/>
<rect x="589.4" y="44.3" width="1.15" height="1.15" fill="#c8c8c8"/>
<rect x="591.1" y="58.3" width="1.15" height="1.15" fill="#e0e0e0"/>
<rect x="592.0" y="47.7" width="1.15" height="1.15" fill="#f4f4f4"/>
<rect x="587.9" y="47.3" width="1.15" height="1.15" fill="#e0e0e0"/>
<rect x="586.9" y="56.9" width="1.15" height="1.15" fill="#c8c8c8"/>
<rect x="588.7" y="58.6" width="1.15" height="1.15" fill="#c8c8c8"/>
<rect x="586.2" y="58.5" width="1.15" height="1.15" fill="#c8c8c8"/>
<rect x="587.9" y="56.5" width="1.15" height="1.15" fill="#e0e0e0"/>
<rect x="591.7" y="46.1" width="1.15" height="1.15" fill="#ffffff"/>
<rect x="589.9" y="48.8" width="1.15" height="1.15" fill="#ffffff"/>
<rect x="598.0" y="47.0" width="1.15" height="1.15" fill="#ffffff"/>
<rect x="583.6" y="42.0" width="1.15" height="1.15" fill="#c8c8c8"/>
<rect x="585.4" y="42.3" width="1.15" height="1.15" fill="#e0e0e0"/>
<rect x="595.9" y="41.8" width="1.15" height="1.15" fill="#ffffff"/>
<rect x="585.4" y="49.9" width="1.15" height="1.15" fill="#f4f4f4"/>
<rect x="585.4" y="46.3" width="1.15" height="1.15" fill="#e0e0e0"/>
<rect x="594.0" y="46.6" width="1.15" height="1.15" fill="#c8c8c8"/>
<rect x="591.9" y="49.9" width="1.15" height="1.15" fill="#f4f4f4"/>
<rect x="581.3" y="43.8" width="1.15" height="1.15" fill="#ffffff"/>
<rect x="590.6" y="47.4" width="1.15" height="1.15" fill="#ffffff"/>
<rect x="594.2" y="42.1" width="1.15" height="1.15" fill="#ffffff"/>
<rect x="587.5" y="54.6" width="1.15" height="1.15" fill="#e0e0e0"/>
<rect x="581.7" y="46.0" width="1.15" height="1.15" fill="#c8c8c8"/>
<rect x="593.3" y="43.5" width="1.15" height="1.15" fill="#e0e0e0"/>
<rect x="581.3" y="55.1" width="1.15" height="1.15" fill="#c8c8c8"/>
<rect x="591.7" y="53.6" width="1.15" height="1.15" fill="#c8c8c8"/>
<rect x="596.5" y="56.2" width="1.15" height="1.15" fill="#c8c8c8"/>
<rect x="588.1" y="56.4" width="1.15" height="1.15" fill="#e0e0e0"/>
<rect x="597.2" y="49.7" width="1.15" height="1.15" fill="#f4f4f4"/>
<rect x="586.5" y="41.7" width="1.15" height="1.15" fill="#c8c8c8"/>
<rect x="591.5" y="52.9" width="1.15" height="1.15" fill="#c8c8c8"/>
<rect x="597.4" y="44.1" width="1.15" height="1.15" fill="#c8c8c8"/>
<rect x="593.5" y="57.1" width="1.15" height="1.15" fill="#ffffff"/>
<rect x="590.7" y="49.0" width="1.15" height="1.15" fill="#f4f4f4"/>
<rect x="582.2" y="45.6" width="1.15" height="1.15" fill="#f4f4f4"/>
<rect x="595.3" y="53.1" width="1.15" height="1.15" fill="#f4f4f4"/>
<rect x="587.0" y="49.1" width="1.15" height="1.15" fill="#f4f4f4"/>
<rect x="599.0" y="53.8" width="1.15" height="1.15" fill="#f4f4f4"/>
<rect x="583.2" y="43.7" width="1.15" height="1.15" fill="#f4f4f4"/>
<rect x="593.8" y="43.9" width="1.15" height="1.15" fill="#ffffff"/>
<rect x="593.7" y="49.2" width="1.15" height="1.15" fill="#e0e0e0"/>
<rect x="592.0" y="48.8" width="1.15" height="1.15" fill="#e0e0e0"/>
<rect x="582.2" y="45.3" width="1.15" height="1.15" fill="#f4f4f4"/>
<rect x="592.9" y="54.6" width="1.15" height="1.15" fill="#ffffff"/>
<rect x="582.0" y="51.6" width="1.15" height="1.15" fill="#c8c8c8"/>
<rect x="596.8" y="43.9" width="1.15" height="1.15" fill="#c8c8c8"/>
<rect x="582.6" y="53.5" width="1.15" height="1.15" fill="#c8c8c8"/>
<rect x="589.8" y="57.9" width="1.15" height="1.15" fill="#ffffff"/>
<rect x="597.5" y="44.0" width="1.15" height="1.15" fill="#ffffff"/>
<rect x="583.7" y="52.6" width="1.15" height="1.15" fill="#ffffff"/>
<rect x="597.4" y="51.3" width="1.15" height="1.15" fill="#e0e0e0"/>
<rect x="585.7" y="51.2" width="1.15" height="1.15" fill="#ffffff"/>
<rect x="596.0" y="46.5" width="1.15" height="1.15" fill="#e0e0e0"/>
<rect x="595.5" y="56.6" width="1.15" height="1.15" fill="#c8c8c8"/>
<rect x="594.3" y="44.7" width="1.15" height="1.15" fill="#f4f4f4"/>
<rect x="592.8" y="43.1" width="1.15" height="1.15" fill="#f4f4f4"/>
<rect x="582.6" y="43.8" width="1.15" height="1.15" fill="#c8c8c8"/>
<rect x="585.3" y="56.9" width="1.15" height="1.15" fill="#c8c8c8"/>
<rect x="598.3" y="43.5" width="1.15" height="1.15" fill="#f4f4f4"/>
<rect x="590.8" y="48.3" width="1.15" height="1.15" fill="#e0e0e0"/>
<rect x="598.0" y="49.1" width="1.15" height="1.15" fill="#e0e0e0"/>
<rect x="594.5" y="43.1" width="1.15" height="1.15" fill="#c8c8c8"/>
<rect x="595.8" y="44.0" width="1.15" height="1.15" fill="#c8c8c8"/>
<rect x="587.4" y="45.7" width="1.15" height="1.15" fill="#ffffff"/>
<rect x="597.7" y="53.9" width="1.15" height="1.15" fill="#c8c8c8"/>
<rect x="587.8" y="54.2" width="1.15" height="1.15" fill="#ffffff"/>
<rect x="592.7" y="55.6" width="1.15" height="1.15" fill="#c8c8c8"/>
<rect x="598.3" y="47.9" width="1.15" height="1.15" fill="#f4f4f4"/>
<rect x="591.7" y="51.6" width="1.15" height="1.15" fill="#e0e0e0"/>
<rect x="588.1" y="43.3" width="1.15" height="1.15" fill="#f4f4f4"/>
<rect x="584.4" y="45.0" width="1.15" height="1.15" fill="#c8c8c8"/>
<rect x="597.0" y="50.0" width="1.15" height="1.15" fill="#ffffff"/>
<rect x="581.0" y="49.8" width="1.15" height="1.15" fill="#c8c8c8"/>
<rect x="586.8" y="49.6" width="1.15" height="1.15" fill="#e0e0e0"/>
<rect x="583.8" y="44.4" width="1.15" height="1.15" fill="#ffffff"/>
<rect x="596.6" y="56.7" width="1.15" height="1.15" fill="#c8c8c8"/>
<rect x="583.7" y="46.0" width="1.15" height="1.15" fill="#ffffff"/>
<rect x="595.7" y="54.7" width="1.15" height="1.15" fill="#e0e0e0"/>
<rect x="581.6" y="57.2" width="1.15" height="1.15" fill="#ffffff"/>
<rect x="597.6" y="48.0" width="1.15" height="1.15" fill="#f4f4f4"/>
<rect x="593.4" y="53.3" width="1.15" height="1.15" fill="#c8c8c8"/>
<rect x="596.3" y="44.3" width="1.15" height="1.15" fill="#ffffff"/>
<rect x="586.2" y="53.3" width="1.15" height="1.15" fill="#e0e0e0"/>
<rect x="581.6" y="54.0" width="1.15" height="1.15" fill="#e0e0e0"/>
<rect x="592.8" y="52.3" width="1.15" height="1.15" fill="#ffffff"/>
<rect x="593.2" y="44.8" width="1.15" height="1.15" fill="#ffffff"/>
<rect x="586.1" y="54.3" width="1.15" height="1.15" fill="#c8c8c8"/>
<rect x="583.9" y="45.8" width="1.15" height="1.15" fill="#e0e0e0"/>
<rect x="597.9" y="52.8" width="1.15" height="1.15" fill="#c8c8c8"/>
<rect x="594.1" y="46.3" width="1.15" height="1.15" fill="#c8c8c8"/>
<rect x="582.1" y="55.2" width="1.15" height="1.15" fill="#c8c8c8"/>
</g>
<path d="M584.6 46Q586 44.6 587.6 46Q588.4 48.6 590 48.6Q591.6 48.6 592.4 46Q594 44.6 595.6 46Q596.6 50.4 595.6 54.6Q594 56 592.4 54.6Q591.6 52.2 590 52.2Q588.4 52.2 587.6 54.6Q586 56 584.6 54.6Q583.6 50.4 584.6 46Z" fill="#5c5c60" stroke="#28b038" stroke-width="0.9"/>
<rect x="606.2" y="40.7" width="19.6" height="19.3" fill="#fff"/>
<path d="M614.6 51.1V41.2" stroke="#22b060" stroke-width="1.4"/><path d="M614.6 51.1H624.8" stroke="#f05464" stroke-width="1.4"/><path d="M614.6 51.1L608.2 57.8" stroke="#10a0f0" stroke-width="1.4"/>
<path d="M636.6 48L641 45.4L645 46.2L649.4 42L651 44.4L646.6 49L642.4 49.6L639 51Z" fill="#e0e000" stroke="#2a2a00" stroke-width="0.7"/>
<path d="M646.4 42.4L650.4 41.4L651.6 43.6L648.4 45Z" fill="#d0d0d0" stroke="#555" stroke-width="0.4"/>
<path d="M632.2 53Q632 47 637.6 46.6Q643.6 46.6 644.4 53Q644.6 59.6 638.4 59.8Q632.6 59.6 632.2 53Z" fill="#e8e800" stroke="#2a2a00" stroke-width="0.8"/>
<ellipse cx="640.8" cy="53.8" rx="2.8" ry="5.2" fill="#a8a800" stroke="#4a4a00" stroke-width="0.5"/>
<path d="M634 50.5Q635.4 56 638.6 59" fill="none" stroke="#5a5a00" stroke-width="0.7" stroke-dasharray="1 1"/>
<path d="M663.4 58.2Q668 59.6 672.8 58.4" stroke="#b0b0b0" stroke-width="1.6" fill="none" opacity="0.7"/>
<path d="M674.9 41.4L675.8 42.2L667.6 52.4L665.8 51.2Z" fill="#d4781c" stroke="#7a4008" stroke-width="0.5"/>
<path d="M665.8 51.2L667.6 52.4L665.6 55.6L663.4 54.2Z" fill="#e8e8e8" stroke="#666" stroke-width="0.5"/>
<path d="M663.4 54.2L665.6 55.6Q664.6 58.4 659 59.6Q660.2 56.2 663.4 54.2Z" fill="#111"/><circle cx="663.6" cy="56.6" r="0.7" fill="#ddd"/>
<rect x="682.7" y="40.1" width="20.9" height="20.5" fill="#f8f8f8"/><rect x="683.3" y="40.7" width="19.7" height="19.3" fill="#858585"/>
<g opacity="0.99"><text x="684.2" y="53.3" font-family="Liberation Serif,serif" font-weight="bold" font-style="italic" font-size="17.6" fill="#000" stroke="#000" stroke-width="0.5">P</text></g>
<g opacity="0.99"><text x="688.6" y="60" font-family="Liberation Serif,serif" font-weight="bold" font-style="italic" font-size="20" fill="#f01018" stroke="#f01018" stroke-width="0.5">P</text></g>
<g fill="none" stroke="#b8b8b8" stroke-width="0.7"><path d="M709.6 48.4Q715.6 48 716.8 42M709.8 50.6Q718 50 719 42.4M710.2 52.8Q720 52.6 721.2 43M710.6 55Q722 55 723.2 44"/></g>
<circle cx="715.0" cy="42.9" r="1.25" fill="#e03038" stroke="#8a4048" stroke-width="0.5"/>
<circle cx="711.2" cy="46.7" r="1.25" fill="#e03038" stroke="#8a4048" stroke-width="0.5"/>
<circle cx="711.6" cy="42.8" r="1.25" fill="#fff" stroke="#ccc" stroke-width="0.5"/>
<circle cx="726.2" cy="44.4" r="1.2" fill="#fff" stroke="#3c3c3c" stroke-width="0.95"/>
<circle cx="723.4" cy="49.0" r="1.2" fill="#fff" stroke="#3c3c3c" stroke-width="0.95"/>
<circle cx="718.6" cy="56.4" r="1.2" fill="#fff" stroke="#3c3c3c" stroke-width="0.95"/>
<path d="M722.4 50.4l0 7.6l1.8 -1.6l1.6 3.4l1.5 -0.7l-1.5 -3.3l2.5 0.0Z" fill="#fff" stroke="#666" stroke-width="0.7"/>
<ellipse cx="744.2" cy="45.6" rx="9.6" ry="3.6" transform="rotate(-14 744.2 45.6)" fill="#d2d2ec" stroke="#b0b0cc" stroke-width="0.5"/><path d="M737 47L752 43.4M741 42.6L748 48.6" stroke="#9090b0" stroke-width="0.6"/>
<circle cx="740.3" cy="42.2" r="1.45" fill="#e02c36" stroke="#8a3038" stroke-width="0.5"/>
<circle cx="736.2" cy="46.3" r="1.45" fill="#e02c36" stroke="#8a3038" stroke-width="0.5"/>
<circle cx="752.7" cy="43.2" r="1.45" fill="#e02c36" stroke="#8a3038" stroke-width="0.5"/>
<circle cx="749.4" cy="48.8" r="1.1" fill="#666"/><circle cx="744.4" cy="57" r="1.25" fill="#fff" stroke="#2a2a2a" stroke-width="1"/>
<path d="M748.4 49.6l0 7.6l1.8 -1.6l1.6 3.4l1.5 -0.7l-1.5 -3.3l2.5 0.0Z" fill="#fff" stroke="#666" stroke-width="0.7"/>
<path d="M764.8 42.4Q766.4 42.2 767.3 43.6L769.5 41.1Q770.6 40.7 771.3 41.4L770.9 42.8L768 45L767.4 46.2Q769 47.4 770.2 47.4Q772 46.6 773.6 47Q775.4 47.4 776.4 48.6Q777.6 49.8 778.2 51.4L778.9 53.8Q780.2 54.4 780 55.6Q780 57 778.4 57.7H764.2Q762.6 57 762 55.6Q761 54.4 761.5 52.6Q761.6 51 762.6 49.4L761.4 49.1Q760.2 48.2 760.5 46.8Q760.8 45 762 43.8Q763.2 42.6 764.8 42.4Z" fill="url(#gBunny)"/>
<path d="M766.6 50.4Q769.6 49 772 51.6Q773.6 54 772.6 56.6M762.6 49.4Q764.4 50 765.4 51.6" fill="none" stroke="#b01860" stroke-width="0.6" opacity="0.7"/>
<rect x="761" y="57.9" width="18.4" height="2.2" fill="url(#gRain)"/>
<g stroke="#f4b078" stroke-width="0.6" stroke-dasharray="1 1" fill="none"><path d="M789.2 44.2L794.6 42.4L801.4 44.9L800.9 49.5L796.8 54.2L790.4 50.7ZM789.2 44.2L800.9 49.5M794.6 42.4L790.4 50.7"/></g>
<circle cx="789.2" cy="44.2" r="1.5" fill="#f8c8a0" opacity="0.6"/><circle cx="789.2" cy="44.2" r="1" fill="#6858d0"/>
<circle cx="794.6" cy="42.4" r="1.5" fill="#f8c8a0" opacity="0.6"/><circle cx="794.6" cy="42.4" r="1" fill="#6858d0"/>
<circle cx="801.4" cy="44.9" r="1.5" fill="#f8c8a0" opacity="0.6"/><circle cx="801.4" cy="44.9" r="1" fill="#6858d0"/>
<circle cx="800.9" cy="49.5" r="1.5" fill="#f8c8a0" opacity="0.6"/><circle cx="800.9" cy="49.5" r="1" fill="#6858d0"/>
<circle cx="796.8" cy="54.2" r="1.5" fill="#f8c8a0" opacity="0.6"/><circle cx="796.8" cy="54.2" r="1" fill="#6858d0"/>
<circle cx="790.4" cy="50.7" r="1.5" fill="#f8c8a0" opacity="0.6"/><circle cx="790.4" cy="50.7" r="1" fill="#6858d0"/>
<g opacity="0.99"><text x="795.8" y="59.6" font-family="Liberation Sans,sans-serif" font-size="4.7" font-weight="bold" text-anchor="middle" fill="#5a5a5a" textLength="18.4" lengthAdjust="spacingAndGlyphs">Reference</text></g>
<rect x="812.8" y="41.8" width="11.8" height="7.6" fill="none" stroke="#888" stroke-width="0.7" stroke-dasharray="1 0.8"/>
<circle cx="814.2" cy="46.7" r="1.2" fill="#e03038"/><circle cx="829" cy="44.2" r="1.2" fill="#fff" stroke="#3c3c3c" stroke-width="0.9"/><circle cx="821.4" cy="56.6" r="1.2" fill="#fff" stroke="#3c3c3c" stroke-width="0.9"/>
<path d="M824.6 49.6l0 7.6l1.8 -1.6l1.6 3.4l1.5 -0.7l-1.5 -3.3l2.5 0.0Z" fill="#fff" stroke="#666" stroke-width="0.7"/>
<g transform="translate(0.0 0)">
<path d="M839 41.6H856" stroke="#888" stroke-width="0.7" stroke-dasharray="1 0.8"/><path d="M839 41.6V50" stroke="#888" stroke-width="0.7" stroke-dasharray="1 0.8"/>
<path d="M846 42.6L840.4 51.6H851.6ZM840.4 51.6L844.6 56.6L848.6 51.6Z" fill="#ee7c80" stroke="#3a2020" stroke-width="0.8"/>
<path d="M848.6 42.6H856L853.6 49.6Z" fill="#ee7c80" stroke="#3a2020" stroke-width="0.8"/><path d="M840.4 51.6L844.6 56.6L848.6 51.6Z" fill="#c8c8c8" stroke="#3a2020" stroke-width="0.8"/>
<path d="M843.2 47H849M843.2 47L846 51.6L849 47" stroke="#5a2828" stroke-width="0.7" fill="none"/>
<path d="M845.6 41.4L853.6 51" stroke="#fff" stroke-width="1.0"/>
</g>
<path d="M851.4 50.4l0 7.6l1.8 -1.6l1.6 3.4l1.5 -0.7l-1.5 -3.3l2.5 0.0Z" fill="#fff" stroke="#666" stroke-width="0.7"/>
<g transform="translate(25.8 0)">
<path d="M839 41.6H856" stroke="#888" stroke-width="0.7" stroke-dasharray="1 0.8"/><path d="M839 41.6V50" stroke="#888" stroke-width="0.7" stroke-dasharray="1 0.8"/>
<path d="M846 42.6L840.4 51.6H851.6ZM840.4 51.6L844.6 56.6L848.6 51.6Z" fill="#ee7c80" stroke="#3a2020" stroke-width="0.8"/>
<path d="M851.4 41.8H855.8L854.6 49.6Z" fill="#c0c0c0" stroke="#555" stroke-width="0.6"/>
<path d="M843.2 47H849M843.2 47L846 51.6L849 47" stroke="#5a2828" stroke-width="0.7" fill="none"/>
<path d="M845.6 41.4L853.6 51" stroke="#fff" stroke-width="1.0"/>
</g>
<path d="M877.2 50.4l0 7.6l1.8 -1.6l1.6 3.4l1.5 -0.7l-1.5 -3.3l2.5 0.0Z" fill="#fff" stroke="#666" stroke-width="0.7"/>
<circle cx="899" cy="50.15" r="9.15" fill="#ffff00" stroke="#1c1c34" stroke-width="1.3"/>
<g opacity="0.99"><text x="899.2" y="57" font-family="Liberation Serif,serif" font-weight="bold" font-style="italic" font-size="20.5" text-anchor="middle" fill="#000">i</text></g>
<path d="M914.2 41V60" stroke="#dcdcdc" stroke-width="1"/>
<path d="M918.4 37V64" stroke="#b4b4b4" stroke-width="1"/><path d="M919.4 37V64" stroke="#ffffff" stroke-width="1"/>
<path d="M922.2 41.3l1.3 -0.9" stroke="#9c9c9c" stroke-width="1.1"/>
<path d="M922.2 44.5l1.3 -0.9" stroke="#9c9c9c" stroke-width="1.1"/>
<path d="M922.2 47.7l1.3 -0.9" stroke="#9c9c9c" stroke-width="1.1"/>
<path d="M922.2 50.9l1.3 -0.9" stroke="#9c9c9c" stroke-width="1.1"/>
<path d="M922.2 54.1l1.3 -0.9" stroke="#9c9c9c" stroke-width="1.1"/>
<path d="M922.2 57.3l1.3 -0.9" stroke="#9c9c9c" stroke-width="1.1"/>
<path d="M922.2 60.5l1.3 -0.9" stroke="#9c9c9c" stroke-width="1.1"/>
<path d="M932.3 47.8L947.3 45.3L939.8 57.9Z" fill="none" stroke="#333" stroke-width="0.6"/>
<circle cx="932.3" cy="47.8" r="1.3" fill="#e03038" stroke="#555" stroke-width="0.5"/>
<circle cx="947.3" cy="45.3" r="1.3" fill="#e03038" stroke="#555" stroke-width="0.5"/>
<circle cx="939.8" cy="57.9" r="1.3" fill="#e03038" stroke="#555" stroke-width="0.5"/>
<path d="M932.0 42.2L946.8 58.0M946.8 42.2L932.0 58.0" stroke="#ff0000" stroke-width="1.5"/>
<path d="M958.6 47.3L972.0 44.6L965.8 56.3Z" fill="#f08088" stroke="#444" stroke-width="0.6"/>
<path d="M959.2 42.2L971.6 56.6M971.6 42.2L959.2 56.6" stroke="#ff0000" stroke-width="1.5"/>
<path d="M983.3 47.8L998.3 45.3L990.8 57.9Z" fill="#f08088" stroke="#333" stroke-width="0.6"/>
<circle cx="983.3" cy="47.8" r="1.3" fill="#fff" stroke="#333" stroke-width="0.6"/>
<circle cx="998.3" cy="45.3" r="1.3" fill="#fff" stroke="#333" stroke-width="0.6"/>
<circle cx="990.8" cy="57.9" r="1.3" fill="#fff" stroke="#333" stroke-width="0.6"/>
<path d="M983.2 42.2L998.0 58.0M998.0 42.2L983.2 58.0" stroke="#ff0000" stroke-width="1.5"/>
<path d="M1005.5 37V64" stroke="#c0c0c0" stroke-width="1"/><path d="M1006.5 37V64" stroke="#fff" stroke-width="1"/>
<circle cx="1585.7" cy="48" r="6.3" fill="none" stroke="#b4b4b4" stroke-width="1.3"/><path d="M1590.4 52.8L1595.6 58" stroke="#b4b4b4" stroke-width="2.6"/>
</svg>
<!--/TB-->
<div id="tbshadow" class="abs"></div>
<!--CHROME-->
<svg class="abs" id="chrome" style="left:0;top:0" width="1600" height="969" viewBox="0 0 1600 969">
<defs>
<radialGradient id="gEye" cx="0.4" cy="0.35" r="0.75"><stop offset="0" stop-color="#e8ecf0"/><stop offset="0.7" stop-color="#c4c8cc"/><stop offset="1" stop-color="#9a9ea2"/></radialGradient>
<linearGradient id="gStrip" x1="0" y1="0" x2="0" y2="1"><stop offset="0" stop-color="#77777c"/><stop offset="0.2" stop-color="#8e8ea4"/><stop offset="1" stop-color="#a6a6f2"/></linearGradient>
<linearGradient id="gMdi" x1="0" y1="0" x2="0" y2="1"><stop offset="0" stop-color="#e6f0fa"/><stop offset="1" stop-color="#d4e4f6"/></linearGradient>
</defs>
<!-- left strip (neighbouring window fragments) -->
<rect x="0" y="0" width="9" height="969" fill="#f1f1f2"/>
<rect x="0" y="66" width="2.4" height="823" fill="url(#gStrip)"/>
<rect x="0" y="889" width="2.4" height="49" fill="#a273aa"/>
<rect x="0" y="938" width="2.4" height="23" fill="#e6e6e6"/>
<rect x="0" y="0" width="3" height="18" fill="#f2956c"/>
<rect x="0" y="18" width="3" height="16" fill="#d2deee"/>
<rect x="0" y="34" width="3" height="30" fill="#fafafa"/>
<rect x="0" y="64" width="1" height="186" fill="#5a5a62"/>
<rect x="2.7" y="0" width="6.3" height="249" fill="#000"/>
<rect x="2.7" y="249" width="3.6" height="15" fill="#c6c6c6"/>
<rect x="2" y="268.5" width="7" height="1" fill="#b8b8b8"/>
<rect x="2.4" y="270" width="6.4" height="47.5" fill="#e2e2e2"/>
<rect x="2" y="317.5" width="7" height="1" fill="#b0b0b0"/>
<path d="M2.4 325.6L5 328.4L2.4 328.8Z" fill="#222"/>
<rect x="2.8" y="726" width="4.4" height="31.5" fill="#b9b9b9" stroke="#a4a4a4" stroke-width="0.6"/>
<path d="M2.6 919.6L5.4 916.4L5 918.6Z" fill="#222"/>
<rect x="2.5" y="925.6" width="6.5" height="35" fill="#dddddd"/>
<rect x="0" y="960" width="9" height="1.2" fill="#fafafa"/>
<rect x="9" y="66" width="1.2" height="872" fill="#e4e4ee" opacity="0.5"/>
<!-- taskbar -->
<rect x="0" y="962" width="1600" height="7" fill="#c1502a"/><rect x="9" y="962" width="1591" height="1" fill="#b63a1c"/>
<rect x="0" y="961" width="2.4" height="8" fill="#d2421e"/>
<rect x="2.4" y="961" width="6.6" height="8" fill="#c04a28"/>
<g fill="#cd7d5e">
<rect x="52" y="963" width="44" height="6"/><rect x="206" y="963" width="49" height="6"/><rect x="309" y="963" width="42.6" height="6"/><rect x="360" y="963" width="48.8" height="6"/><rect x="412.5" y="963" width="47.5" height="6"/></g>
<rect x="464" y="963" width="48" height="6" fill="#dba184" stroke="#e8c0a8" stroke-width="0.6"/>
<g fill="#a84424"><rect x="98.5" y="963" width="1.2" height="6"/><rect x="256.5" y="963" width="1.2" height="6"/><rect x="305" y="963" width="1.2" height="6"/><rect x="353" y="963" width="1" height="6"/><rect x="356" y="963" width="1" height="6"/></g>
<ellipse cx="60" cy="969.5" rx="5" ry="3" fill="#d8c080"/>
<ellipse cx="127.5" cy="970" rx="5" ry="3.4" fill="#e84050"/>
<ellipse cx="181" cy="970" rx="6" ry="3.4" fill="#2898e8"/>
<ellipse cx="277" cy="970" rx="6" ry="3.4" fill="#2898e8"/>
<ellipse cx="330" cy="970" rx="5" ry="3.4" fill="#e04040"/>
<rect x="423.8" y="966.6" width="25.2" height="3" fill="#fff"/>
<ellipse cx="487.6" cy="970" rx="7" ry="4" fill="#f4f0f0"/>
<path d="M36 969L41 966V969Z" fill="#e8e8e8"/>
<!-- app icons (eye) -->
<g id="eye1"><circle cx="17.3" cy="9" r="6.3" fill="url(#gEye)"/><path d="M21 4.4Q24.6 7.4 22.6 12.6Q22.6 8.4 20 5.2Z" fill="#50545a" opacity="0.8"/><ellipse cx="18.2" cy="9.3" rx="4.7" ry="2.3" transform="rotate(-18 18.2 9.3)" fill="#111"/><ellipse cx="17.5" cy="9.5" rx="2.1" ry="1.15" transform="rotate(-18 17.5 9.5)" fill="#62c466"/><circle cx="19.2" cy="9.3" r="0.85" fill="#f4f4f4"/></g>
<g transform="translate(-0.9 18.4)"><circle cx="17.3" cy="9" r="6.3" fill="url(#gEye)"/><path d="M21 4.4Q24.6 7.4 22.6 12.6Q22.6 8.4 20 5.2Z" fill="#50545a" opacity="0.8"/><ellipse cx="18.2" cy="9.3" rx="4.7" ry="2.3" transform="rotate(-18 18.2 9.3)" fill="#111"/><ellipse cx="17.5" cy="9.5" rx="2.1" ry="1.15" transform="rotate(-18 17.5 9.5)" fill="#62c466"/><circle cx="19.2" cy="9.3" r="0.85" fill="#f4f4f4"/></g>
<!-- window controls -->
<rect x="1562.7" y="0" width="37.3" height="15.3" fill="#c75050"/>
<path d="M1578.3 4.6L1584.7 11M1584.7 4.6L1578.3 11" stroke="#fff" stroke-width="1.7"/>
<rect x="1526" y="9" width="7" height="1.9" fill="#1a1a1a"/>
<g fill="none" stroke="#1a1a1a" stroke-width="1.1"><path d="M1549.5 5V3.6H1555.2V9H1553.6"/><rect x="1547.6" y="5.6" width="5.8" height="5.6"/><path d="M1547.6 6.4H1553.4" stroke-width="1.6"/></g>
<!-- MDI controls -->
<g stroke="#9fb4cc" stroke-width="0.9" fill="url(#gMdi)"><rect x="1558" y="20.4" width="13.4" height="14" rx="1.2"/><rect x="1573" y="20.4" width="13.6" height="14" rx="1.2"/><rect x="1588.2" y="20.4" width="13.6" height="14" rx="1.2"/></g>
<rect x="1561.8" y="29" width="5.2" height="1.5" fill="#2c3c54"/>
<g fill="none" stroke="#2c3c54" stroke-width="1"><path d="M1578.6 26V24.4H1582.8V28.4H1581.6"/><rect x="1577" y="26.6" width="4.4" height="3.8"/><path d="M1577 27.2H1581.4" stroke-width="1.4"/></g>
<path d="M1592.6 24.8L1598.2 30.6M1598.2 24.8L1592.6 30.6" stroke="#2c3c54" stroke-width="1.5"/>
</svg>
<!--/CHROME-->
</body>
</html>
